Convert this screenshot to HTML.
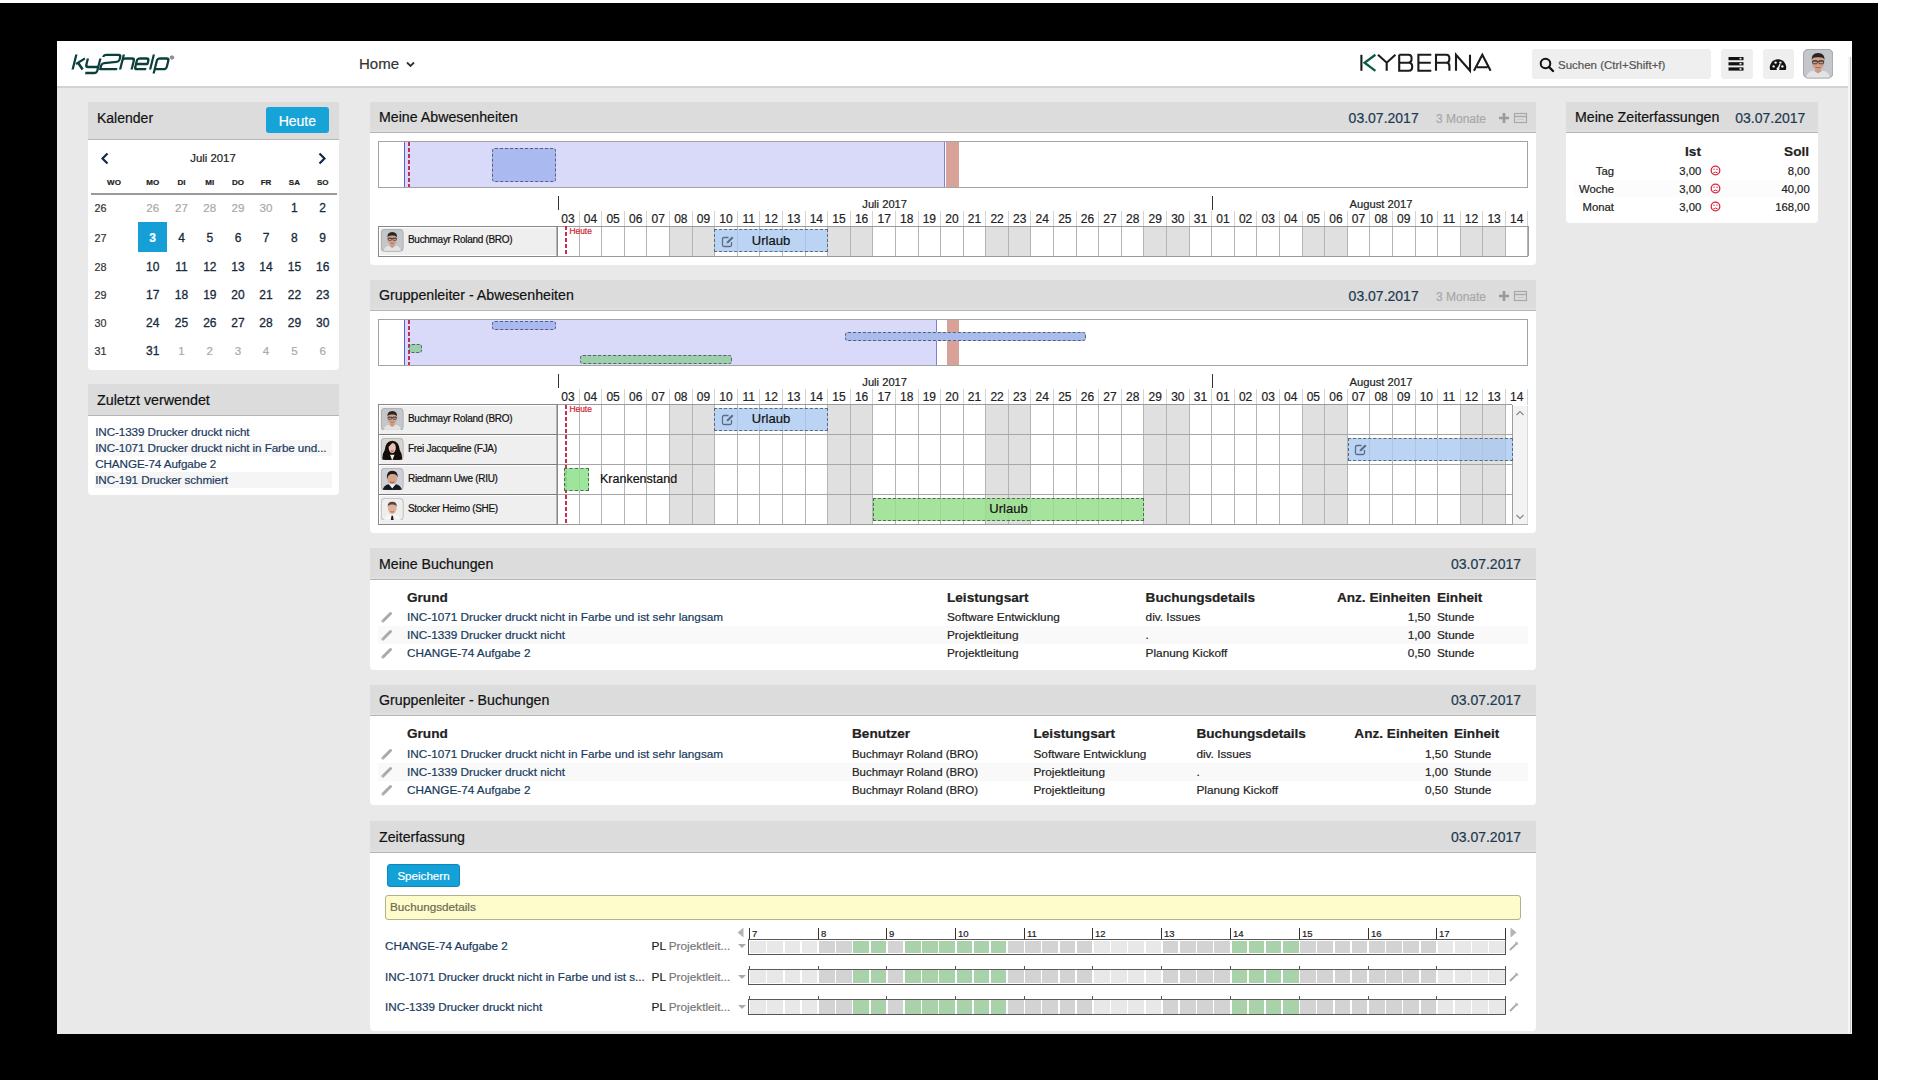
<!DOCTYPE html>
<html><head><meta charset="utf-8"><title>ky2help</title>
<style>
html,body{margin:0;padding:0;}
body{width:1920px;height:1080px;position:relative;overflow:hidden;background:#fff;font-family:"Liberation Sans", sans-serif;}
div{-webkit-text-stroke-width:0.2px;}
</style></head><body>
<div style="position:absolute;left:0px;top:3px;width:1878px;height:1077px;background:#000;"></div>
<div style="position:absolute;left:57px;top:41px;width:1795px;height:992.6px;background:#e9e9e9;"></div>
<div style="position:absolute;left:57px;top:41px;width:1795px;height:46px;background:#fff;"></div>
<div style="position:absolute;left:57px;top:86px;width:1791px;height:2px;background:#d2d2d2;"></div>
<div style="position:absolute;left:1848px;top:57px;width:4px;height:976px;background:#f6f6f6;"></div>
<div style="position:absolute;left:1850px;top:57px;width:1.2px;height:976px;background:#c4c4c4;"></div>
<svg style="position:absolute;left:0;top:0" width="1920" height="100">
<g transform="translate(75,54) skewX(-14)" fill="none" stroke="#0b3f3c" stroke-width="2.3" stroke-linecap="butt" stroke-linejoin="round">
<path d="M1.5,0.5 V15.5 M11,4.5 L3.5,10 M5.5,9 L11.5,15.5"/>
<path d="M14,4.5 V10.5 Q14,13 16.5,13 H25.5 M26.5,4.5 V16.5 Q26.5,19 24,19 H15"/>
<path d="M29,3 Q29,0.8 31.5,0.8 H43.5 Q46,0.8 46,3.3 V5 Q46,7.5 43.5,7.8 L31.5,9.2 Q29,9.5 29,12 V15.2 H46"/>
<path d="M49,0.5 V15.5 M49,7 Q49,4.5 51.5,4.5 H58 Q60.5,4.5 60.5,7 V15.5"/>
<path d="M75,15.2 H66 Q63.5,15.2 63.5,12.7 V7 Q63.5,4.5 66,4.5 H72.5 Q75,4.5 75,7 V10 H63.5"/>
<path d="M79,0.5 V15.5"/>
<path d="M83.5,19.5 V7 Q83.5,4.5 86,4.5 H92.5 Q95,4.5 95,7 V12.7 Q95,15.2 92.5,15.2 H83.5"/>
</g>
<circle cx="172" cy="57.5" r="1.7" fill="#999" stroke="#666" stroke-width="0.7"/>
<g fill="none" stroke="#1b1b1b" stroke-width="2.1" stroke-linejoin="miter">
<path d="M1361.4,54.8 V70.8"/>
<path d="M1375.4,54.8 L1364.6,62.7 L1375.4,70.8" stroke="#0a5a48" stroke-width="2.3"/>
<path d="M1378,54.8 L1386.7,62.7 L1395.4,54.8 M1386.7,62.7 V70.8"/>
<path d="M1399.2,54.8 H1408.5 Q1411.6,54.8 1411.6,58.6 Q1411.6,62.7 1408.5,62.7 H1399.2 M1408.8,62.7 Q1412.2,62.7 1412.2,66.7 Q1412.2,70.8 1408.8,70.8 H1399.2 V54.8"/>
<path d="M1431.3,54.8 H1418.4 V70.8 H1431.3 M1418.4,62.7 H1430.8"/>
<path d="M1436,70.8 V54.8 H1446.3 Q1449.4,54.8 1449.4,58.7 Q1449.4,62.7 1446.3,62.7 H1436 M1446.3,62.7 Q1449.4,62.7 1449.4,66 V70.8"/>
<path d="M1456,70.8 V54.8 L1470,70.8 V54.8"/>
<path d="M1474,70.8 L1482.3,54.8 L1490.6,70.8 M1477,67.3 H1487.6"/>
</g>
</svg>
<div style="position:absolute;left:359px;top:53.8px;height:20px;line-height:20px;font-size:15px;color:#333;font-weight:400;white-space:nowrap;">Home</div>
<svg style="position:absolute;left:405px;top:60px" width="12" height="10"><path d="M2,2.5 L5.5,6 L9,2.5" fill="none" stroke="#333" stroke-width="1.8"/></svg>
<div style="position:absolute;left:1532px;top:49px;width:179px;height:30px;background:#efefef;border-radius:3px;"></div>
<svg style="position:absolute;left:1538px;top:56px" width="18" height="18"><circle cx="7.5" cy="7.5" r="4.8" fill="none" stroke="#111" stroke-width="2"/><path d="M11,11 L15,15" stroke="#111" stroke-width="2.4" stroke-linecap="round"/></svg>
<div style="position:absolute;left:1558px;top:55.0px;height:20px;line-height:20px;font-size:11.5px;color:#555;font-weight:400;white-space:nowrap;">Suchen (Ctrl+Shift+f)</div>
<div style="position:absolute;left:1721px;top:49px;width:32px;height:30px;background:#efefef;border-radius:3px;"></div>
<svg style="position:absolute;left:1727px;top:55px" width="20" height="18"><rect x="1.5" y="2" width="15" height="3.2" fill="#111"/><rect x="1.5" y="7.2" width="15" height="3.2" fill="#111"/><rect x="1.5" y="12.4" width="15" height="3.2" fill="#111"/><rect x="12.5" y="2.8" width="2" height="1.6" fill="#eee"/><rect x="12.5" y="8" width="2" height="1.6" fill="#eee"/><rect x="12.5" y="13.2" width="2" height="1.6" fill="#eee"/></svg>
<div style="position:absolute;left:1762.5px;top:49px;width:31px;height:30px;background:#efefef;border-radius:3px;"></div>
<svg style="position:absolute;left:1769px;top:57px" width="18" height="15"><path d="M1.2,13 A8.2,8.2 0 1 1 16.8,13 Z" fill="#111"/><circle cx="4.6" cy="9.4" r="1.2" fill="#f0f0f0"/><circle cx="6.6" cy="5.6" r="1.2" fill="#f0f0f0"/><circle cx="11.4" cy="5.6" r="1.2" fill="#f0f0f0"/><circle cx="13.4" cy="9.4" r="1.2" fill="#f0f0f0"/><path d="M9,12 L11,7.2" stroke="#f0f0f0" stroke-width="1.5"/><circle cx="9" cy="11.8" r="1.5" fill="#f0f0f0"/></svg>
<svg style="position:absolute;left:1803.3px;top:49px" width="30.2" height="29.5" viewBox="0 0 30 30" preserveAspectRatio="none"><defs><clipPath id="cp"><rect x="0" y="0" width="30" height="30" rx="5"/></clipPath></defs><g clip-path="url(#cp)"><rect width="30" height="30" fill="#c3c6cb"/><path d="M3,30 Q4,23 10,22 L15,24 L20,22 Q26,23 27,30 Z" fill="#e4e2e2"/><path d="M12,19 H18 V23 L15,25 L12,23 Z" fill="#c99a85"/><ellipse cx="15" cy="13.5" rx="6.2" ry="8" fill="#d2a08a"/><path d="M8.5,12 Q8,4 15,4 Q22,4 21.5,12 Q21,8 15,8.5 Q9,8 8.5,12 Z" fill="#2b2522"/><path d="M9,12.6 H21" stroke="#2a2a2a" stroke-width="0.7"/><rect x="9.6" y="11.8" width="4.6" height="3.2" rx="0.8" fill="none" stroke="#2a2a2a" stroke-width="0.8"/><rect x="15.8" y="11.8" width="4.6" height="3.2" rx="0.8" fill="none" stroke="#2a2a2a" stroke-width="0.8"/><path d="M12.5,18.5 Q15,19.8 17.5,18.5" stroke="#9a5e50" stroke-width="0.9" fill="none"/></g><rect x="0.4" y="0.4" width="29.2" height="29.2" rx="5" fill="none" stroke="#9d9d9d" stroke-width="0.8"/></svg>
<div style="position:absolute;left:88px;top:102px;width:251px;height:36.5px;background:#dcdcdc;"></div>
<div style="position:absolute;left:88px;top:138.5px;width:251px;height:1.5px;background:#b5b5b5;"></div>
<div style="position:absolute;left:88px;top:140px;width:251px;height:230px;background:#fff;border-radius:0 0 4px 4px;"></div>
<div style="position:absolute;left:97px;top:107.7px;height:20px;line-height:20px;font-size:14px;color:#111;font-weight:400;white-space:nowrap;">Kalender</div>
<div style="position:absolute;left:266px;top:107px;width:62.5px;height:26px;background:#15a3d8;border-radius:3px;"></div>
<div style="position:absolute;left:-2.6999999999999886px;width:600px;top:110.5px;height:20px;line-height:20px;font-size:14px;color:#fff;font-weight:400;white-space:nowrap;text-align:center;">Heute</div>
<svg style="position:absolute;left:99px;top:152px" width="12" height="13"><path d="M8.5,1.5 L3.5,6.5 L8.5,11.5" fill="none" stroke="#15284a" stroke-width="2.2"/></svg>
<svg style="position:absolute;left:316px;top:152px" width="12" height="13"><path d="M3.5,1.5 L8.5,6.5 L3.5,11.5" fill="none" stroke="#15284a" stroke-width="2.2"/></svg>
<div style="position:absolute;left:-87px;width:600px;top:148.4px;height:20px;line-height:20px;font-size:11.4px;color:#222;font-weight:400;white-space:nowrap;text-align:center;">Juli 2017</div>
<div style="position:absolute;left:-186px;width:600px;top:172.7px;height:20px;line-height:20px;font-size:8px;color:#222;font-weight:700;white-space:nowrap;text-align:center;">WO</div>
<div style="position:absolute;left:-147.3px;width:600px;top:172.7px;height:20px;line-height:20px;font-size:8px;color:#222;font-weight:700;white-space:nowrap;text-align:center;">MO</div>
<div style="position:absolute;left:-118.5px;width:600px;top:172.7px;height:20px;line-height:20px;font-size:8px;color:#222;font-weight:700;white-space:nowrap;text-align:center;">DI</div>
<div style="position:absolute;left:-90.19999999999999px;width:600px;top:172.7px;height:20px;line-height:20px;font-size:8px;color:#222;font-weight:700;white-space:nowrap;text-align:center;">MI</div>
<div style="position:absolute;left:-62px;width:600px;top:172.7px;height:20px;line-height:20px;font-size:8px;color:#222;font-weight:700;white-space:nowrap;text-align:center;">DO</div>
<div style="position:absolute;left:-34px;width:600px;top:172.7px;height:20px;line-height:20px;font-size:8px;color:#222;font-weight:700;white-space:nowrap;text-align:center;">FR</div>
<div style="position:absolute;left:-5.600000000000023px;width:600px;top:172.7px;height:20px;line-height:20px;font-size:8px;color:#222;font-weight:700;white-space:nowrap;text-align:center;">SA</div>
<div style="position:absolute;left:22.69999999999999px;width:600px;top:172.7px;height:20px;line-height:20px;font-size:8px;color:#222;font-weight:700;white-space:nowrap;text-align:center;">SO</div>
<div style="position:absolute;left:90.5px;top:193px;width:246px;height:1.5px;background:#9a9a9a;"></div>
<div style="position:absolute;left:94.4px;top:198.0px;height:20px;line-height:20px;font-size:10.8px;color:#333;font-weight:400;white-space:nowrap;">26</div>
<div style="position:absolute;left:-147.3px;width:600px;top:198.0px;height:20px;line-height:20px;font-size:11.6px;color:#a9a9a9;font-weight:400;white-space:nowrap;text-align:center;">26</div>
<div style="position:absolute;left:-118.5px;width:600px;top:198.0px;height:20px;line-height:20px;font-size:11.6px;color:#a9a9a9;font-weight:400;white-space:nowrap;text-align:center;">27</div>
<div style="position:absolute;left:-90.19999999999999px;width:600px;top:198.0px;height:20px;line-height:20px;font-size:11.6px;color:#a9a9a9;font-weight:400;white-space:nowrap;text-align:center;">28</div>
<div style="position:absolute;left:-62px;width:600px;top:198.0px;height:20px;line-height:20px;font-size:11.6px;color:#a9a9a9;font-weight:400;white-space:nowrap;text-align:center;">29</div>
<div style="position:absolute;left:-34px;width:600px;top:198.0px;height:20px;line-height:20px;font-size:11.6px;color:#a9a9a9;font-weight:400;white-space:nowrap;text-align:center;">30</div>
<div style="position:absolute;left:-5.600000000000023px;width:600px;top:198.0px;height:20px;line-height:20px;font-size:12px;color:#172a3c;font-weight:400;white-space:nowrap;text-align:center;-webkit-text-stroke:0.3px #172a3c;">1</div>
<div style="position:absolute;left:22.69999999999999px;width:600px;top:198.0px;height:20px;line-height:20px;font-size:12px;color:#172a3c;font-weight:400;white-space:nowrap;text-align:center;-webkit-text-stroke:0.3px #172a3c;">2</div>
<div style="position:absolute;left:94.4px;top:227.8px;height:20px;line-height:20px;font-size:10.8px;color:#333;font-weight:400;white-space:nowrap;">27</div>
<div style="position:absolute;left:138px;top:222px;width:29px;height:30px;background:#169fd6;"></div>
<div style="position:absolute;left:-147.3px;width:600px;top:227.8px;height:20px;line-height:20px;font-size:12px;color:#fff;font-weight:700;white-space:nowrap;text-align:center;">3</div>
<div style="position:absolute;left:-118.5px;width:600px;top:227.8px;height:20px;line-height:20px;font-size:12px;color:#172a3c;font-weight:400;white-space:nowrap;text-align:center;-webkit-text-stroke:0.3px #172a3c;">4</div>
<div style="position:absolute;left:-90.19999999999999px;width:600px;top:227.8px;height:20px;line-height:20px;font-size:12px;color:#172a3c;font-weight:400;white-space:nowrap;text-align:center;-webkit-text-stroke:0.3px #172a3c;">5</div>
<div style="position:absolute;left:-62px;width:600px;top:227.8px;height:20px;line-height:20px;font-size:12px;color:#172a3c;font-weight:400;white-space:nowrap;text-align:center;-webkit-text-stroke:0.3px #172a3c;">6</div>
<div style="position:absolute;left:-34px;width:600px;top:227.8px;height:20px;line-height:20px;font-size:12px;color:#172a3c;font-weight:400;white-space:nowrap;text-align:center;-webkit-text-stroke:0.3px #172a3c;">7</div>
<div style="position:absolute;left:-5.600000000000023px;width:600px;top:227.8px;height:20px;line-height:20px;font-size:12px;color:#172a3c;font-weight:400;white-space:nowrap;text-align:center;-webkit-text-stroke:0.3px #172a3c;">8</div>
<div style="position:absolute;left:22.69999999999999px;width:600px;top:227.8px;height:20px;line-height:20px;font-size:12px;color:#172a3c;font-weight:400;white-space:nowrap;text-align:center;-webkit-text-stroke:0.3px #172a3c;">9</div>
<div style="position:absolute;left:94.4px;top:256.5px;height:20px;line-height:20px;font-size:10.8px;color:#333;font-weight:400;white-space:nowrap;">28</div>
<div style="position:absolute;left:-147.3px;width:600px;top:256.5px;height:20px;line-height:20px;font-size:12px;color:#172a3c;font-weight:400;white-space:nowrap;text-align:center;-webkit-text-stroke:0.3px #172a3c;">10</div>
<div style="position:absolute;left:-118.5px;width:600px;top:256.5px;height:20px;line-height:20px;font-size:12px;color:#172a3c;font-weight:400;white-space:nowrap;text-align:center;-webkit-text-stroke:0.3px #172a3c;">11</div>
<div style="position:absolute;left:-90.19999999999999px;width:600px;top:256.5px;height:20px;line-height:20px;font-size:12px;color:#172a3c;font-weight:400;white-space:nowrap;text-align:center;-webkit-text-stroke:0.3px #172a3c;">12</div>
<div style="position:absolute;left:-62px;width:600px;top:256.5px;height:20px;line-height:20px;font-size:12px;color:#172a3c;font-weight:400;white-space:nowrap;text-align:center;-webkit-text-stroke:0.3px #172a3c;">13</div>
<div style="position:absolute;left:-34px;width:600px;top:256.5px;height:20px;line-height:20px;font-size:12px;color:#172a3c;font-weight:400;white-space:nowrap;text-align:center;-webkit-text-stroke:0.3px #172a3c;">14</div>
<div style="position:absolute;left:-5.600000000000023px;width:600px;top:256.5px;height:20px;line-height:20px;font-size:12px;color:#172a3c;font-weight:400;white-space:nowrap;text-align:center;-webkit-text-stroke:0.3px #172a3c;">15</div>
<div style="position:absolute;left:22.69999999999999px;width:600px;top:256.5px;height:20px;line-height:20px;font-size:12px;color:#172a3c;font-weight:400;white-space:nowrap;text-align:center;-webkit-text-stroke:0.3px #172a3c;">16</div>
<div style="position:absolute;left:94.4px;top:285.0px;height:20px;line-height:20px;font-size:10.8px;color:#333;font-weight:400;white-space:nowrap;">29</div>
<div style="position:absolute;left:-147.3px;width:600px;top:285.0px;height:20px;line-height:20px;font-size:12px;color:#172a3c;font-weight:400;white-space:nowrap;text-align:center;-webkit-text-stroke:0.3px #172a3c;">17</div>
<div style="position:absolute;left:-118.5px;width:600px;top:285.0px;height:20px;line-height:20px;font-size:12px;color:#172a3c;font-weight:400;white-space:nowrap;text-align:center;-webkit-text-stroke:0.3px #172a3c;">18</div>
<div style="position:absolute;left:-90.19999999999999px;width:600px;top:285.0px;height:20px;line-height:20px;font-size:12px;color:#172a3c;font-weight:400;white-space:nowrap;text-align:center;-webkit-text-stroke:0.3px #172a3c;">19</div>
<div style="position:absolute;left:-62px;width:600px;top:285.0px;height:20px;line-height:20px;font-size:12px;color:#172a3c;font-weight:400;white-space:nowrap;text-align:center;-webkit-text-stroke:0.3px #172a3c;">20</div>
<div style="position:absolute;left:-34px;width:600px;top:285.0px;height:20px;line-height:20px;font-size:12px;color:#172a3c;font-weight:400;white-space:nowrap;text-align:center;-webkit-text-stroke:0.3px #172a3c;">21</div>
<div style="position:absolute;left:-5.600000000000023px;width:600px;top:285.0px;height:20px;line-height:20px;font-size:12px;color:#172a3c;font-weight:400;white-space:nowrap;text-align:center;-webkit-text-stroke:0.3px #172a3c;">22</div>
<div style="position:absolute;left:22.69999999999999px;width:600px;top:285.0px;height:20px;line-height:20px;font-size:12px;color:#172a3c;font-weight:400;white-space:nowrap;text-align:center;-webkit-text-stroke:0.3px #172a3c;">23</div>
<div style="position:absolute;left:94.4px;top:313.0px;height:20px;line-height:20px;font-size:10.8px;color:#333;font-weight:400;white-space:nowrap;">30</div>
<div style="position:absolute;left:-147.3px;width:600px;top:313.0px;height:20px;line-height:20px;font-size:12px;color:#172a3c;font-weight:400;white-space:nowrap;text-align:center;-webkit-text-stroke:0.3px #172a3c;">24</div>
<div style="position:absolute;left:-118.5px;width:600px;top:313.0px;height:20px;line-height:20px;font-size:12px;color:#172a3c;font-weight:400;white-space:nowrap;text-align:center;-webkit-text-stroke:0.3px #172a3c;">25</div>
<div style="position:absolute;left:-90.19999999999999px;width:600px;top:313.0px;height:20px;line-height:20px;font-size:12px;color:#172a3c;font-weight:400;white-space:nowrap;text-align:center;-webkit-text-stroke:0.3px #172a3c;">26</div>
<div style="position:absolute;left:-62px;width:600px;top:313.0px;height:20px;line-height:20px;font-size:12px;color:#172a3c;font-weight:400;white-space:nowrap;text-align:center;-webkit-text-stroke:0.3px #172a3c;">27</div>
<div style="position:absolute;left:-34px;width:600px;top:313.0px;height:20px;line-height:20px;font-size:12px;color:#172a3c;font-weight:400;white-space:nowrap;text-align:center;-webkit-text-stroke:0.3px #172a3c;">28</div>
<div style="position:absolute;left:-5.600000000000023px;width:600px;top:313.0px;height:20px;line-height:20px;font-size:12px;color:#172a3c;font-weight:400;white-space:nowrap;text-align:center;-webkit-text-stroke:0.3px #172a3c;">29</div>
<div style="position:absolute;left:22.69999999999999px;width:600px;top:313.0px;height:20px;line-height:20px;font-size:12px;color:#172a3c;font-weight:400;white-space:nowrap;text-align:center;-webkit-text-stroke:0.3px #172a3c;">30</div>
<div style="position:absolute;left:94.4px;top:341.0px;height:20px;line-height:20px;font-size:10.8px;color:#333;font-weight:400;white-space:nowrap;">31</div>
<div style="position:absolute;left:-147.3px;width:600px;top:341.0px;height:20px;line-height:20px;font-size:12px;color:#172a3c;font-weight:400;white-space:nowrap;text-align:center;-webkit-text-stroke:0.3px #172a3c;">31</div>
<div style="position:absolute;left:-118.5px;width:600px;top:341.0px;height:20px;line-height:20px;font-size:11.6px;color:#a9a9a9;font-weight:400;white-space:nowrap;text-align:center;">1</div>
<div style="position:absolute;left:-90.19999999999999px;width:600px;top:341.0px;height:20px;line-height:20px;font-size:11.6px;color:#a9a9a9;font-weight:400;white-space:nowrap;text-align:center;">2</div>
<div style="position:absolute;left:-62px;width:600px;top:341.0px;height:20px;line-height:20px;font-size:11.6px;color:#a9a9a9;font-weight:400;white-space:nowrap;text-align:center;">3</div>
<div style="position:absolute;left:-34px;width:600px;top:341.0px;height:20px;line-height:20px;font-size:11.6px;color:#a9a9a9;font-weight:400;white-space:nowrap;text-align:center;">4</div>
<div style="position:absolute;left:-5.600000000000023px;width:600px;top:341.0px;height:20px;line-height:20px;font-size:11.6px;color:#a9a9a9;font-weight:400;white-space:nowrap;text-align:center;">5</div>
<div style="position:absolute;left:22.69999999999999px;width:600px;top:341.0px;height:20px;line-height:20px;font-size:11.6px;color:#a9a9a9;font-weight:400;white-space:nowrap;text-align:center;">6</div>
<div style="position:absolute;left:88px;top:384px;width:251px;height:30.5px;background:#dcdcdc;"></div>
<div style="position:absolute;left:88px;top:414.5px;width:251px;height:1.5px;background:#b5b5b5;"></div>
<div style="position:absolute;left:88px;top:416px;width:251px;height:79px;background:#fff;border-radius:0 0 4px 4px;"></div>
<div style="position:absolute;left:97px;top:390.2px;height:20px;line-height:20px;font-size:14.3px;color:#111;font-weight:400;white-space:nowrap;">Zuletzt verwendet</div>
<div style="position:absolute;left:95px;top:440px;width:237px;height:16px;background:#f7f7f7;"></div>
<div style="position:absolute;left:95px;top:472px;width:237px;height:16px;background:#f5f5f5;"></div>
<div style="position:absolute;left:95.2px;top:422.0px;height:20px;line-height:20px;font-size:11.7px;color:#1d3a5e;font-weight:400;white-space:nowrap;letter-spacing:-0.1px;">INC-1339 Drucker druckt nicht</div>
<div style="position:absolute;left:95.2px;top:438.0px;height:20px;line-height:20px;font-size:11.7px;color:#1d3a5e;font-weight:400;white-space:nowrap;letter-spacing:-0.1px;">INC-1071 Drucker druckt nicht in Farbe und...</div>
<div style="position:absolute;left:95.2px;top:454.0px;height:20px;line-height:20px;font-size:11.7px;color:#1d3a5e;font-weight:400;white-space:nowrap;letter-spacing:-0.1px;">CHANGE-74 Aufgabe 2</div>
<div style="position:absolute;left:95.2px;top:470.0px;height:20px;line-height:20px;font-size:11.7px;color:#1d3a5e;font-weight:400;white-space:nowrap;letter-spacing:-0.1px;">INC-191 Drucker schmiert</div>
<div style="position:absolute;left:370px;top:102px;width:1166px;height:29.5px;background:#dcdcdc;"></div>
<div style="position:absolute;left:370px;top:130px;width:1166px;height:1.5px;background:#e0e0e0;"></div>
<div style="position:absolute;left:370px;top:131.5px;width:1166px;height:1.5px;background:#b5b5b5;"></div>
<div style="position:absolute;left:370px;top:133px;width:1166px;height:131.5px;background:#fff;border-radius:0 0 4px 4px;"></div>
<div style="position:absolute;left:379px;top:107.0px;height:20px;line-height:20px;font-size:14.2px;color:#111;font-weight:400;white-space:nowrap;">Meine Abwesenheiten</div>
<div style="position:absolute;left:818.7px;width:600px;top:107.5px;height:20px;line-height:20px;font-size:14px;color:#1d3a50;font-weight:400;white-space:nowrap;text-align:right;">03.07.2017</div>
<div style="position:absolute;left:1436px;top:108.5px;height:20px;line-height:20px;font-size:12px;color:#a8a8a8;font-weight:400;white-space:nowrap;">3 Monate</div>
<svg style="position:absolute;left:1497px;top:110.5px" width="34" height="14"><path d="M7,2 V12 M2,7 H12" stroke="#9a9a9a" stroke-width="2.6"/><rect x="17.5" y="2.5" width="12" height="9" fill="none" stroke="#a8a8a8" stroke-width="1.2"/><path d="M17.5,5.5 H29.5" stroke="#a8a8a8" stroke-width="1.4"/><path d="M20,8.5 H27" stroke="#c8c8c8" stroke-width="1"/></svg>
<div style="position:absolute;left:377.5px;top:141px;width:1150.5px;height:47px;background:#fff;border:1px solid #a3a3a3;box-sizing:border-box;"></div>
<div style="position:absolute;left:404px;top:142px;width:541px;height:45px;background:#d9d9f9;border-left:1.5px solid #5c5cd0;border-right:1px solid #8080d0;box-sizing:border-box;"></div>
<div style="position:absolute;left:408px;top:142px;width:1.5px;height:45px;background:repeating-linear-gradient(to bottom,#c2305a 0 4px,transparent 4px 6px);"></div>
<div style="position:absolute;left:945.5px;top:142px;width:13.5px;height:45px;background:#d9a299;"></div>
<div style="position:absolute;left:492px;top:148px;width:63.5px;height:33.5px;background:#aabaf0;border:1.5px dashed #55607a;box-sizing:border-box;border-radius:3px;"></div>
<div style="position:absolute;left:558.2px;top:196px;width:1.2px;height:14px;background:#333;"></div>
<div style="position:absolute;left:1211.5px;top:196px;width:1.2px;height:14px;background:#333;"></div>
<div style="position:absolute;left:584.7px;width:600px;top:193.7px;height:20px;line-height:20px;font-size:11.2px;color:#222;font-weight:400;white-space:nowrap;text-align:center;">Juli 2017</div>
<div style="position:absolute;left:1081px;width:600px;top:193.7px;height:20px;line-height:20px;font-size:11.2px;color:#222;font-weight:400;white-space:nowrap;text-align:center;">August 2017</div>
<div style="position:absolute;left:267.895px;width:600px;top:209.0px;height:20px;line-height:20px;font-size:12px;color:#222;font-weight:400;white-space:nowrap;text-align:center;">03</div>
<div style="position:absolute;left:290.485px;width:600px;top:209.0px;height:20px;line-height:20px;font-size:12px;color:#222;font-weight:400;white-space:nowrap;text-align:center;">04</div>
<div style="position:absolute;left:578.69px;top:211px;width:1px;height:15px;background:#d4d4d4;"></div>
<div style="position:absolute;left:313.07499999999993px;width:600px;top:209.0px;height:20px;line-height:20px;font-size:12px;color:#222;font-weight:400;white-space:nowrap;text-align:center;">05</div>
<div style="position:absolute;left:601.28px;top:211px;width:1px;height:15px;background:#d4d4d4;"></div>
<div style="position:absolute;left:335.66499999999996px;width:600px;top:209.0px;height:20px;line-height:20px;font-size:12px;color:#222;font-weight:400;white-space:nowrap;text-align:center;">06</div>
<div style="position:absolute;left:623.87px;top:211px;width:1px;height:15px;background:#d4d4d4;"></div>
<div style="position:absolute;left:358.255px;width:600px;top:209.0px;height:20px;line-height:20px;font-size:12px;color:#222;font-weight:400;white-space:nowrap;text-align:center;">07</div>
<div style="position:absolute;left:646.46px;top:211px;width:1px;height:15px;background:#d4d4d4;"></div>
<div style="position:absolute;left:380.845px;width:600px;top:209.0px;height:20px;line-height:20px;font-size:12px;color:#222;font-weight:400;white-space:nowrap;text-align:center;">08</div>
<div style="position:absolute;left:669.0500000000001px;top:211px;width:1px;height:15px;background:#d4d4d4;"></div>
<div style="position:absolute;left:403.43499999999995px;width:600px;top:209.0px;height:20px;line-height:20px;font-size:12px;color:#222;font-weight:400;white-space:nowrap;text-align:center;">09</div>
<div style="position:absolute;left:691.64px;top:211px;width:1px;height:15px;background:#d4d4d4;"></div>
<div style="position:absolute;left:426.025px;width:600px;top:209.0px;height:20px;line-height:20px;font-size:12px;color:#222;font-weight:400;white-space:nowrap;text-align:center;">10</div>
<div style="position:absolute;left:714.23px;top:211px;width:1px;height:15px;background:#d4d4d4;"></div>
<div style="position:absolute;left:448.615px;width:600px;top:209.0px;height:20px;line-height:20px;font-size:12px;color:#222;font-weight:400;white-space:nowrap;text-align:center;">11</div>
<div style="position:absolute;left:736.82px;top:211px;width:1px;height:15px;background:#d4d4d4;"></div>
<div style="position:absolute;left:471.20500000000004px;width:600px;top:209.0px;height:20px;line-height:20px;font-size:12px;color:#222;font-weight:400;white-space:nowrap;text-align:center;">12</div>
<div style="position:absolute;left:759.4100000000001px;top:211px;width:1px;height:15px;background:#d4d4d4;"></div>
<div style="position:absolute;left:493.79499999999996px;width:600px;top:209.0px;height:20px;line-height:20px;font-size:12px;color:#222;font-weight:400;white-space:nowrap;text-align:center;">13</div>
<div style="position:absolute;left:782.0px;top:211px;width:1px;height:15px;background:#d4d4d4;"></div>
<div style="position:absolute;left:516.385px;width:600px;top:209.0px;height:20px;line-height:20px;font-size:12px;color:#222;font-weight:400;white-space:nowrap;text-align:center;">14</div>
<div style="position:absolute;left:804.59px;top:211px;width:1px;height:15px;background:#d4d4d4;"></div>
<div style="position:absolute;left:538.975px;width:600px;top:209.0px;height:20px;line-height:20px;font-size:12px;color:#222;font-weight:400;white-space:nowrap;text-align:center;">15</div>
<div style="position:absolute;left:827.1800000000001px;top:211px;width:1px;height:15px;background:#d4d4d4;"></div>
<div style="position:absolute;left:561.5649999999999px;width:600px;top:209.0px;height:20px;line-height:20px;font-size:12px;color:#222;font-weight:400;white-space:nowrap;text-align:center;">16</div>
<div style="position:absolute;left:849.77px;top:211px;width:1px;height:15px;background:#d4d4d4;"></div>
<div style="position:absolute;left:584.155px;width:600px;top:209.0px;height:20px;line-height:20px;font-size:12px;color:#222;font-weight:400;white-space:nowrap;text-align:center;">17</div>
<div style="position:absolute;left:872.36px;top:211px;width:1px;height:15px;background:#d4d4d4;"></div>
<div style="position:absolute;left:606.745px;width:600px;top:209.0px;height:20px;line-height:20px;font-size:12px;color:#222;font-weight:400;white-space:nowrap;text-align:center;">18</div>
<div style="position:absolute;left:894.95px;top:211px;width:1px;height:15px;background:#d4d4d4;"></div>
<div style="position:absolute;left:629.3349999999999px;width:600px;top:209.0px;height:20px;line-height:20px;font-size:12px;color:#222;font-weight:400;white-space:nowrap;text-align:center;">19</div>
<div style="position:absolute;left:917.54px;top:211px;width:1px;height:15px;background:#d4d4d4;"></div>
<div style="position:absolute;left:651.925px;width:600px;top:209.0px;height:20px;line-height:20px;font-size:12px;color:#222;font-weight:400;white-space:nowrap;text-align:center;">20</div>
<div style="position:absolute;left:940.13px;top:211px;width:1px;height:15px;background:#d4d4d4;"></div>
<div style="position:absolute;left:674.515px;width:600px;top:209.0px;height:20px;line-height:20px;font-size:12px;color:#222;font-weight:400;white-space:nowrap;text-align:center;">21</div>
<div style="position:absolute;left:962.72px;top:211px;width:1px;height:15px;background:#d4d4d4;"></div>
<div style="position:absolute;left:697.1049999999999px;width:600px;top:209.0px;height:20px;line-height:20px;font-size:12px;color:#222;font-weight:400;white-space:nowrap;text-align:center;">22</div>
<div style="position:absolute;left:985.31px;top:211px;width:1px;height:15px;background:#d4d4d4;"></div>
<div style="position:absolute;left:719.695px;width:600px;top:209.0px;height:20px;line-height:20px;font-size:12px;color:#222;font-weight:400;white-space:nowrap;text-align:center;">23</div>
<div style="position:absolute;left:1007.9000000000001px;top:211px;width:1px;height:15px;background:#d4d4d4;"></div>
<div style="position:absolute;left:742.2850000000001px;width:600px;top:209.0px;height:20px;line-height:20px;font-size:12px;color:#222;font-weight:400;white-space:nowrap;text-align:center;">24</div>
<div style="position:absolute;left:1030.49px;top:211px;width:1px;height:15px;background:#d4d4d4;"></div>
<div style="position:absolute;left:764.875px;width:600px;top:209.0px;height:20px;line-height:20px;font-size:12px;color:#222;font-weight:400;white-space:nowrap;text-align:center;">25</div>
<div style="position:absolute;left:1053.08px;top:211px;width:1px;height:15px;background:#d4d4d4;"></div>
<div style="position:absolute;left:787.4650000000001px;width:600px;top:209.0px;height:20px;line-height:20px;font-size:12px;color:#222;font-weight:400;white-space:nowrap;text-align:center;">26</div>
<div style="position:absolute;left:1075.67px;top:211px;width:1px;height:15px;background:#d4d4d4;"></div>
<div style="position:absolute;left:810.0550000000001px;width:600px;top:209.0px;height:20px;line-height:20px;font-size:12px;color:#222;font-weight:400;white-space:nowrap;text-align:center;">27</div>
<div style="position:absolute;left:1098.26px;top:211px;width:1px;height:15px;background:#d4d4d4;"></div>
<div style="position:absolute;left:832.645px;width:600px;top:209.0px;height:20px;line-height:20px;font-size:12px;color:#222;font-weight:400;white-space:nowrap;text-align:center;">28</div>
<div style="position:absolute;left:1120.85px;top:211px;width:1px;height:15px;background:#d4d4d4;"></div>
<div style="position:absolute;left:855.2350000000001px;width:600px;top:209.0px;height:20px;line-height:20px;font-size:12px;color:#222;font-weight:400;white-space:nowrap;text-align:center;">29</div>
<div style="position:absolute;left:1143.44px;top:211px;width:1px;height:15px;background:#d4d4d4;"></div>
<div style="position:absolute;left:877.825px;width:600px;top:209.0px;height:20px;line-height:20px;font-size:12px;color:#222;font-weight:400;white-space:nowrap;text-align:center;">30</div>
<div style="position:absolute;left:1166.03px;top:211px;width:1px;height:15px;background:#d4d4d4;"></div>
<div style="position:absolute;left:900.415px;width:600px;top:209.0px;height:20px;line-height:20px;font-size:12px;color:#222;font-weight:400;white-space:nowrap;text-align:center;">31</div>
<div style="position:absolute;left:1188.62px;top:211px;width:1px;height:15px;background:#d4d4d4;"></div>
<div style="position:absolute;left:923.0050000000001px;width:600px;top:209.0px;height:20px;line-height:20px;font-size:12px;color:#222;font-weight:400;white-space:nowrap;text-align:center;">01</div>
<div style="position:absolute;left:1211.21px;top:211px;width:1px;height:15px;background:#d4d4d4;"></div>
<div style="position:absolute;left:945.5950000000003px;width:600px;top:209.0px;height:20px;line-height:20px;font-size:12px;color:#222;font-weight:400;white-space:nowrap;text-align:center;">02</div>
<div style="position:absolute;left:1233.8000000000002px;top:211px;width:1px;height:15px;background:#d4d4d4;"></div>
<div style="position:absolute;left:968.185px;width:600px;top:209.0px;height:20px;line-height:20px;font-size:12px;color:#222;font-weight:400;white-space:nowrap;text-align:center;">03</div>
<div style="position:absolute;left:1256.3899999999999px;top:211px;width:1px;height:15px;background:#d4d4d4;"></div>
<div style="position:absolute;left:990.7750000000001px;width:600px;top:209.0px;height:20px;line-height:20px;font-size:12px;color:#222;font-weight:400;white-space:nowrap;text-align:center;">04</div>
<div style="position:absolute;left:1278.98px;top:211px;width:1px;height:15px;background:#d4d4d4;"></div>
<div style="position:absolute;left:1013.3650000000002px;width:600px;top:209.0px;height:20px;line-height:20px;font-size:12px;color:#222;font-weight:400;white-space:nowrap;text-align:center;">05</div>
<div style="position:absolute;left:1301.5700000000002px;top:211px;width:1px;height:15px;background:#d4d4d4;"></div>
<div style="position:absolute;left:1035.955px;width:600px;top:209.0px;height:20px;line-height:20px;font-size:12px;color:#222;font-weight:400;white-space:nowrap;text-align:center;">06</div>
<div style="position:absolute;left:1324.1599999999999px;top:211px;width:1px;height:15px;background:#d4d4d4;"></div>
<div style="position:absolute;left:1058.545px;width:600px;top:209.0px;height:20px;line-height:20px;font-size:12px;color:#222;font-weight:400;white-space:nowrap;text-align:center;">07</div>
<div style="position:absolute;left:1346.75px;top:211px;width:1px;height:15px;background:#d4d4d4;"></div>
<div style="position:absolute;left:1081.1350000000002px;width:600px;top:209.0px;height:20px;line-height:20px;font-size:12px;color:#222;font-weight:400;white-space:nowrap;text-align:center;">08</div>
<div style="position:absolute;left:1369.3400000000001px;top:211px;width:1px;height:15px;background:#d4d4d4;"></div>
<div style="position:absolute;left:1103.7250000000001px;width:600px;top:209.0px;height:20px;line-height:20px;font-size:12px;color:#222;font-weight:400;white-space:nowrap;text-align:center;">09</div>
<div style="position:absolute;left:1391.93px;top:211px;width:1px;height:15px;background:#d4d4d4;"></div>
<div style="position:absolute;left:1126.315px;width:600px;top:209.0px;height:20px;line-height:20px;font-size:12px;color:#222;font-weight:400;white-space:nowrap;text-align:center;">10</div>
<div style="position:absolute;left:1414.52px;top:211px;width:1px;height:15px;background:#d4d4d4;"></div>
<div style="position:absolute;left:1148.9050000000002px;width:600px;top:209.0px;height:20px;line-height:20px;font-size:12px;color:#222;font-weight:400;white-space:nowrap;text-align:center;">11</div>
<div style="position:absolute;left:1437.1100000000001px;top:211px;width:1px;height:15px;background:#d4d4d4;"></div>
<div style="position:absolute;left:1171.4950000000001px;width:600px;top:209.0px;height:20px;line-height:20px;font-size:12px;color:#222;font-weight:400;white-space:nowrap;text-align:center;">12</div>
<div style="position:absolute;left:1459.7px;top:211px;width:1px;height:15px;background:#d4d4d4;"></div>
<div style="position:absolute;left:1194.085px;width:600px;top:209.0px;height:20px;line-height:20px;font-size:12px;color:#222;font-weight:400;white-space:nowrap;text-align:center;">13</div>
<div style="position:absolute;left:1482.29px;top:211px;width:1px;height:15px;background:#d4d4d4;"></div>
<div style="position:absolute;left:1216.6750000000002px;width:600px;top:209.0px;height:20px;line-height:20px;font-size:12px;color:#222;font-weight:400;white-space:nowrap;text-align:center;">14</div>
<div style="position:absolute;left:1504.88px;top:211px;width:1px;height:15px;background:#d4d4d4;"></div>
<div style="position:absolute;left:1527.47px;top:211px;width:1px;height:15px;background:#d4d4d4;"></div>
<div style="position:absolute;left:556.6px;top:226px;width:971.4px;height:30px;background:#fff;"></div>
<div style="position:absolute;left:1302.0700000000002px;top:226px;width:22.59px;height:30px;background:#e0e0e0;"></div>
<div style="position:absolute;left:1324.6599999999999px;top:226px;width:22.59px;height:30px;background:#e0e0e0;"></div>
<div style="position:absolute;left:669.5500000000001px;top:226px;width:22.59px;height:30px;background:#e0e0e0;"></div>
<div style="position:absolute;left:692.14px;top:226px;width:22.59px;height:30px;background:#e0e0e0;"></div>
<div style="position:absolute;left:1460.2px;top:226px;width:22.59px;height:30px;background:#e0e0e0;"></div>
<div style="position:absolute;left:1482.79px;top:226px;width:22.59px;height:30px;background:#e0e0e0;"></div>
<div style="position:absolute;left:827.6800000000001px;top:226px;width:22.59px;height:30px;background:#e0e0e0;"></div>
<div style="position:absolute;left:850.27px;top:226px;width:22.59px;height:30px;background:#e0e0e0;"></div>
<div style="position:absolute;left:985.81px;top:226px;width:22.59px;height:30px;background:#e0e0e0;"></div>
<div style="position:absolute;left:1008.4000000000001px;top:226px;width:22.59px;height:30px;background:#e0e0e0;"></div>
<div style="position:absolute;left:1143.94px;top:226px;width:22.59px;height:30px;background:#e0e0e0;"></div>
<div style="position:absolute;left:1166.53px;top:226px;width:22.59px;height:30px;background:#e0e0e0;"></div>
<div style="position:absolute;left:556.1px;top:226px;width:1px;height:30px;background:#b4b4b4;"></div>
<div style="position:absolute;left:578.69px;top:226px;width:1px;height:30px;background:#b4b4b4;"></div>
<div style="position:absolute;left:601.28px;top:226px;width:1px;height:30px;background:#b4b4b4;"></div>
<div style="position:absolute;left:623.87px;top:226px;width:1px;height:30px;background:#b4b4b4;"></div>
<div style="position:absolute;left:646.46px;top:226px;width:1px;height:30px;background:#b4b4b4;"></div>
<div style="position:absolute;left:669.0500000000001px;top:226px;width:1px;height:30px;background:#b4b4b4;"></div>
<div style="position:absolute;left:691.64px;top:226px;width:1px;height:30px;background:#b4b4b4;"></div>
<div style="position:absolute;left:714.23px;top:226px;width:1px;height:30px;background:#b4b4b4;"></div>
<div style="position:absolute;left:736.82px;top:226px;width:1px;height:30px;background:#b4b4b4;"></div>
<div style="position:absolute;left:759.4100000000001px;top:226px;width:1px;height:30px;background:#b4b4b4;"></div>
<div style="position:absolute;left:782.0px;top:226px;width:1px;height:30px;background:#b4b4b4;"></div>
<div style="position:absolute;left:804.59px;top:226px;width:1px;height:30px;background:#b4b4b4;"></div>
<div style="position:absolute;left:827.1800000000001px;top:226px;width:1px;height:30px;background:#b4b4b4;"></div>
<div style="position:absolute;left:849.77px;top:226px;width:1px;height:30px;background:#b4b4b4;"></div>
<div style="position:absolute;left:872.36px;top:226px;width:1px;height:30px;background:#b4b4b4;"></div>
<div style="position:absolute;left:894.95px;top:226px;width:1px;height:30px;background:#b4b4b4;"></div>
<div style="position:absolute;left:917.54px;top:226px;width:1px;height:30px;background:#b4b4b4;"></div>
<div style="position:absolute;left:940.13px;top:226px;width:1px;height:30px;background:#b4b4b4;"></div>
<div style="position:absolute;left:962.72px;top:226px;width:1px;height:30px;background:#b4b4b4;"></div>
<div style="position:absolute;left:985.31px;top:226px;width:1px;height:30px;background:#b4b4b4;"></div>
<div style="position:absolute;left:1007.9000000000001px;top:226px;width:1px;height:30px;background:#b4b4b4;"></div>
<div style="position:absolute;left:1030.49px;top:226px;width:1px;height:30px;background:#b4b4b4;"></div>
<div style="position:absolute;left:1053.08px;top:226px;width:1px;height:30px;background:#b4b4b4;"></div>
<div style="position:absolute;left:1075.67px;top:226px;width:1px;height:30px;background:#b4b4b4;"></div>
<div style="position:absolute;left:1098.26px;top:226px;width:1px;height:30px;background:#b4b4b4;"></div>
<div style="position:absolute;left:1120.85px;top:226px;width:1px;height:30px;background:#b4b4b4;"></div>
<div style="position:absolute;left:1143.44px;top:226px;width:1px;height:30px;background:#b4b4b4;"></div>
<div style="position:absolute;left:1166.03px;top:226px;width:1px;height:30px;background:#b4b4b4;"></div>
<div style="position:absolute;left:1188.62px;top:226px;width:1px;height:30px;background:#b4b4b4;"></div>
<div style="position:absolute;left:1211.21px;top:226px;width:1px;height:30px;background:#b4b4b4;"></div>
<div style="position:absolute;left:1233.8000000000002px;top:226px;width:1px;height:30px;background:#b4b4b4;"></div>
<div style="position:absolute;left:1256.3899999999999px;top:226px;width:1px;height:30px;background:#b4b4b4;"></div>
<div style="position:absolute;left:1278.98px;top:226px;width:1px;height:30px;background:#b4b4b4;"></div>
<div style="position:absolute;left:1301.5700000000002px;top:226px;width:1px;height:30px;background:#b4b4b4;"></div>
<div style="position:absolute;left:1324.1599999999999px;top:226px;width:1px;height:30px;background:#b4b4b4;"></div>
<div style="position:absolute;left:1346.75px;top:226px;width:1px;height:30px;background:#b4b4b4;"></div>
<div style="position:absolute;left:1369.3400000000001px;top:226px;width:1px;height:30px;background:#b4b4b4;"></div>
<div style="position:absolute;left:1391.93px;top:226px;width:1px;height:30px;background:#b4b4b4;"></div>
<div style="position:absolute;left:1414.52px;top:226px;width:1px;height:30px;background:#b4b4b4;"></div>
<div style="position:absolute;left:1437.1100000000001px;top:226px;width:1px;height:30px;background:#b4b4b4;"></div>
<div style="position:absolute;left:1459.7px;top:226px;width:1px;height:30px;background:#b4b4b4;"></div>
<div style="position:absolute;left:1482.29px;top:226px;width:1px;height:30px;background:#b4b4b4;"></div>
<div style="position:absolute;left:1504.88px;top:226px;width:1px;height:30px;background:#b4b4b4;"></div>
<div style="position:absolute;left:1527.47px;top:226px;width:1px;height:30px;background:#b4b4b4;"></div>
<div style="position:absolute;left:556.6px;top:225.5px;width:971.4px;height:1px;background:#9a9a9a;"></div>
<div style="position:absolute;left:556.6px;top:255.5px;width:971.4px;height:1px;background:#9a9a9a;"></div>
<div style="position:absolute;left:378.5px;top:226.8px;width:177.60000000000002px;height:28.4px;background:#efefef;box-shadow:inset 0 1px 0 #fff, inset 1px 0 0 #fff;"></div>
<svg style="position:absolute;left:381px;top:229.3px" width="22.5" height="22.7" viewBox="0 0 30 30" preserveAspectRatio="none"><defs><clipPath id="cp"><rect x="0" y="0" width="30" height="30" rx="5"/></clipPath></defs><g clip-path="url(#cp)"><rect width="30" height="30" fill="#c3c6cb"/><path d="M3,30 Q4,23 10,22 L15,24 L20,22 Q26,23 27,30 Z" fill="#e4e2e2"/><path d="M12,19 H18 V23 L15,25 L12,23 Z" fill="#c99a85"/><ellipse cx="15" cy="13.5" rx="6.2" ry="8" fill="#d2a08a"/><path d="M8.5,12 Q8,4 15,4 Q22,4 21.5,12 Q21,8 15,8.5 Q9,8 8.5,12 Z" fill="#2b2522"/><path d="M9,12.6 H21" stroke="#2a2a2a" stroke-width="0.7"/><rect x="9.6" y="11.8" width="4.6" height="3.2" rx="0.8" fill="none" stroke="#2a2a2a" stroke-width="0.8"/><rect x="15.8" y="11.8" width="4.6" height="3.2" rx="0.8" fill="none" stroke="#2a2a2a" stroke-width="0.8"/><path d="M12.5,18.5 Q15,19.8 17.5,18.5" stroke="#9a5e50" stroke-width="0.9" fill="none"/></g><rect x="0.4" y="0.4" width="29.2" height="29.2" rx="5" fill="none" stroke="#9d9d9d" stroke-width="0.8"/></svg>
<div style="position:absolute;left:408px;top:230.2px;height:20px;line-height:20px;font-size:10px;color:#111;font-weight:400;white-space:nowrap;letter-spacing:-0.3px;-webkit-text-stroke:0.2px #111;">Buchmayr Roland (BRO)</div>
<div style="position:absolute;left:377.5px;top:225.5px;width:180.10000000000002px;height:1px;background:#888;"></div>
<div style="position:absolute;left:377.5px;top:255.5px;width:180.10000000000002px;height:1px;background:#888;"></div>
<div style="position:absolute;left:377.5px;top:226px;width:1px;height:30px;background:#8a8a8a;"></div>
<div style="position:absolute;left:557px;top:226px;width:1px;height:30px;background:#8a8a8a;"></div>
<div style="position:absolute;left:1527.5px;top:226px;width:1px;height:30px;background:#9e9e9e;"></div>
<div style="position:absolute;left:565.3px;top:226px;width:1.5px;height:30px;background:repeating-linear-gradient(to bottom,#c8304f 0 4px,transparent 4px 6px);"></div>
<div style="position:absolute;left:569.5px;top:220.8px;height:20px;line-height:20px;font-size:8.4px;color:#d0202c;font-weight:400;white-space:nowrap;-webkit-text-stroke:0.2px #d0202c;">Heute</div>
<div style="position:absolute;left:714px;top:229px;width:114px;height:23px;background:rgba(168,200,240,0.78);border:1.5px dashed #5a6a80;box-sizing:border-box;"></div>
<svg style="position:absolute;left:721px;top:234.5px" width="14" height="13"><path d="M7.5,2.5 H3 Q1.5,2.5 1.5,4 V10 Q1.5,11.5 3,11.5 H9 Q10.5,11.5 10.5,10 V7" fill="none" stroke="#5d6c86" stroke-width="1.3"/><path d="M5.5,8.5 L6,6.5 L11,1.5 L12.5,3 L7.5,8 Z" fill="#5d6c86"/></svg>
<div style="position:absolute;left:471px;width:600px;top:230.5px;height:20px;line-height:20px;font-size:13px;color:#111;font-weight:400;white-space:nowrap;text-align:center;">Urlaub</div>
<div style="position:absolute;left:370px;top:280px;width:1166px;height:29.5px;background:#dcdcdc;"></div>
<div style="position:absolute;left:370px;top:308px;width:1166px;height:1.5px;background:#e0e0e0;"></div>
<div style="position:absolute;left:370px;top:309.5px;width:1166px;height:1.5px;background:#b5b5b5;"></div>
<div style="position:absolute;left:370px;top:311px;width:1166px;height:222px;background:#fff;border-radius:0 0 4px 4px;"></div>
<div style="position:absolute;left:379px;top:285.0px;height:20px;line-height:20px;font-size:14.2px;color:#111;font-weight:400;white-space:nowrap;">Gruppenleiter - Abwesenheiten</div>
<div style="position:absolute;left:818.7px;width:600px;top:285.5px;height:20px;line-height:20px;font-size:14px;color:#1d3a50;font-weight:400;white-space:nowrap;text-align:right;">03.07.2017</div>
<div style="position:absolute;left:1436px;top:286.5px;height:20px;line-height:20px;font-size:12px;color:#a8a8a8;font-weight:400;white-space:nowrap;">3 Monate</div>
<svg style="position:absolute;left:1497px;top:288.5px" width="34" height="14"><path d="M7,2 V12 M2,7 H12" stroke="#9a9a9a" stroke-width="2.6"/><rect x="17.5" y="2.5" width="12" height="9" fill="none" stroke="#a8a8a8" stroke-width="1.2"/><path d="M17.5,5.5 H29.5" stroke="#a8a8a8" stroke-width="1.4"/><path d="M20,8.5 H27" stroke="#c8c8c8" stroke-width="1"/></svg>
<div style="position:absolute;left:377.5px;top:319px;width:1150.5px;height:46.5px;background:#fff;border:1px solid #a3a3a3;box-sizing:border-box;"></div>
<div style="position:absolute;left:404px;top:320px;width:533px;height:44.5px;background:#d9d9f9;border-left:1.5px solid #5c5cd0;border-right:1px solid #8080d0;box-sizing:border-box;"></div>
<div style="position:absolute;left:408px;top:320px;width:1.5px;height:44.5px;background:repeating-linear-gradient(to bottom,#c2305a 0 4px,transparent 4px 6px);"></div>
<div style="position:absolute;left:947px;top:320px;width:12px;height:44.5px;background:#d9a299;"></div>
<div style="position:absolute;left:492px;top:321px;width:63.5px;height:9px;background:#aabaf0;border:1.5px dashed #55607a;box-sizing:border-box;border-radius:3px;"></div>
<div style="position:absolute;left:409px;top:344px;width:13px;height:8.5px;background:#9ccfaa;border:1.5px dashed #55607a;box-sizing:border-box;border-radius:3px;"></div>
<div style="position:absolute;left:580px;top:355px;width:152px;height:9px;background:#9ccfaa;border:1.5px dashed #55607a;box-sizing:border-box;border-radius:3px;"></div>
<div style="position:absolute;left:845px;top:332px;width:241px;height:9px;background:#aabcec;border:1.5px dashed #55607a;box-sizing:border-box;border-radius:3px;"></div>
<div style="position:absolute;left:558.2px;top:374px;width:1.2px;height:13.5px;background:#333;"></div>
<div style="position:absolute;left:1211.5px;top:374px;width:1.2px;height:13.5px;background:#333;"></div>
<div style="position:absolute;left:584.7px;width:600px;top:371.5px;height:20px;line-height:20px;font-size:11.2px;color:#222;font-weight:400;white-space:nowrap;text-align:center;">Juli 2017</div>
<div style="position:absolute;left:1081px;width:600px;top:371.5px;height:20px;line-height:20px;font-size:11.2px;color:#222;font-weight:400;white-space:nowrap;text-align:center;">August 2017</div>
<div style="position:absolute;left:267.895px;width:600px;top:387.0px;height:20px;line-height:20px;font-size:12px;color:#222;font-weight:400;white-space:nowrap;text-align:center;">03</div>
<div style="position:absolute;left:290.485px;width:600px;top:387.0px;height:20px;line-height:20px;font-size:12px;color:#222;font-weight:400;white-space:nowrap;text-align:center;">04</div>
<div style="position:absolute;left:578.69px;top:389px;width:1px;height:15.5px;background:#d4d4d4;"></div>
<div style="position:absolute;left:313.07499999999993px;width:600px;top:387.0px;height:20px;line-height:20px;font-size:12px;color:#222;font-weight:400;white-space:nowrap;text-align:center;">05</div>
<div style="position:absolute;left:601.28px;top:389px;width:1px;height:15.5px;background:#d4d4d4;"></div>
<div style="position:absolute;left:335.66499999999996px;width:600px;top:387.0px;height:20px;line-height:20px;font-size:12px;color:#222;font-weight:400;white-space:nowrap;text-align:center;">06</div>
<div style="position:absolute;left:623.87px;top:389px;width:1px;height:15.5px;background:#d4d4d4;"></div>
<div style="position:absolute;left:358.255px;width:600px;top:387.0px;height:20px;line-height:20px;font-size:12px;color:#222;font-weight:400;white-space:nowrap;text-align:center;">07</div>
<div style="position:absolute;left:646.46px;top:389px;width:1px;height:15.5px;background:#d4d4d4;"></div>
<div style="position:absolute;left:380.845px;width:600px;top:387.0px;height:20px;line-height:20px;font-size:12px;color:#222;font-weight:400;white-space:nowrap;text-align:center;">08</div>
<div style="position:absolute;left:669.0500000000001px;top:389px;width:1px;height:15.5px;background:#d4d4d4;"></div>
<div style="position:absolute;left:403.43499999999995px;width:600px;top:387.0px;height:20px;line-height:20px;font-size:12px;color:#222;font-weight:400;white-space:nowrap;text-align:center;">09</div>
<div style="position:absolute;left:691.64px;top:389px;width:1px;height:15.5px;background:#d4d4d4;"></div>
<div style="position:absolute;left:426.025px;width:600px;top:387.0px;height:20px;line-height:20px;font-size:12px;color:#222;font-weight:400;white-space:nowrap;text-align:center;">10</div>
<div style="position:absolute;left:714.23px;top:389px;width:1px;height:15.5px;background:#d4d4d4;"></div>
<div style="position:absolute;left:448.615px;width:600px;top:387.0px;height:20px;line-height:20px;font-size:12px;color:#222;font-weight:400;white-space:nowrap;text-align:center;">11</div>
<div style="position:absolute;left:736.82px;top:389px;width:1px;height:15.5px;background:#d4d4d4;"></div>
<div style="position:absolute;left:471.20500000000004px;width:600px;top:387.0px;height:20px;line-height:20px;font-size:12px;color:#222;font-weight:400;white-space:nowrap;text-align:center;">12</div>
<div style="position:absolute;left:759.4100000000001px;top:389px;width:1px;height:15.5px;background:#d4d4d4;"></div>
<div style="position:absolute;left:493.79499999999996px;width:600px;top:387.0px;height:20px;line-height:20px;font-size:12px;color:#222;font-weight:400;white-space:nowrap;text-align:center;">13</div>
<div style="position:absolute;left:782.0px;top:389px;width:1px;height:15.5px;background:#d4d4d4;"></div>
<div style="position:absolute;left:516.385px;width:600px;top:387.0px;height:20px;line-height:20px;font-size:12px;color:#222;font-weight:400;white-space:nowrap;text-align:center;">14</div>
<div style="position:absolute;left:804.59px;top:389px;width:1px;height:15.5px;background:#d4d4d4;"></div>
<div style="position:absolute;left:538.975px;width:600px;top:387.0px;height:20px;line-height:20px;font-size:12px;color:#222;font-weight:400;white-space:nowrap;text-align:center;">15</div>
<div style="position:absolute;left:827.1800000000001px;top:389px;width:1px;height:15.5px;background:#d4d4d4;"></div>
<div style="position:absolute;left:561.5649999999999px;width:600px;top:387.0px;height:20px;line-height:20px;font-size:12px;color:#222;font-weight:400;white-space:nowrap;text-align:center;">16</div>
<div style="position:absolute;left:849.77px;top:389px;width:1px;height:15.5px;background:#d4d4d4;"></div>
<div style="position:absolute;left:584.155px;width:600px;top:387.0px;height:20px;line-height:20px;font-size:12px;color:#222;font-weight:400;white-space:nowrap;text-align:center;">17</div>
<div style="position:absolute;left:872.36px;top:389px;width:1px;height:15.5px;background:#d4d4d4;"></div>
<div style="position:absolute;left:606.745px;width:600px;top:387.0px;height:20px;line-height:20px;font-size:12px;color:#222;font-weight:400;white-space:nowrap;text-align:center;">18</div>
<div style="position:absolute;left:894.95px;top:389px;width:1px;height:15.5px;background:#d4d4d4;"></div>
<div style="position:absolute;left:629.3349999999999px;width:600px;top:387.0px;height:20px;line-height:20px;font-size:12px;color:#222;font-weight:400;white-space:nowrap;text-align:center;">19</div>
<div style="position:absolute;left:917.54px;top:389px;width:1px;height:15.5px;background:#d4d4d4;"></div>
<div style="position:absolute;left:651.925px;width:600px;top:387.0px;height:20px;line-height:20px;font-size:12px;color:#222;font-weight:400;white-space:nowrap;text-align:center;">20</div>
<div style="position:absolute;left:940.13px;top:389px;width:1px;height:15.5px;background:#d4d4d4;"></div>
<div style="position:absolute;left:674.515px;width:600px;top:387.0px;height:20px;line-height:20px;font-size:12px;color:#222;font-weight:400;white-space:nowrap;text-align:center;">21</div>
<div style="position:absolute;left:962.72px;top:389px;width:1px;height:15.5px;background:#d4d4d4;"></div>
<div style="position:absolute;left:697.1049999999999px;width:600px;top:387.0px;height:20px;line-height:20px;font-size:12px;color:#222;font-weight:400;white-space:nowrap;text-align:center;">22</div>
<div style="position:absolute;left:985.31px;top:389px;width:1px;height:15.5px;background:#d4d4d4;"></div>
<div style="position:absolute;left:719.695px;width:600px;top:387.0px;height:20px;line-height:20px;font-size:12px;color:#222;font-weight:400;white-space:nowrap;text-align:center;">23</div>
<div style="position:absolute;left:1007.9000000000001px;top:389px;width:1px;height:15.5px;background:#d4d4d4;"></div>
<div style="position:absolute;left:742.2850000000001px;width:600px;top:387.0px;height:20px;line-height:20px;font-size:12px;color:#222;font-weight:400;white-space:nowrap;text-align:center;">24</div>
<div style="position:absolute;left:1030.49px;top:389px;width:1px;height:15.5px;background:#d4d4d4;"></div>
<div style="position:absolute;left:764.875px;width:600px;top:387.0px;height:20px;line-height:20px;font-size:12px;color:#222;font-weight:400;white-space:nowrap;text-align:center;">25</div>
<div style="position:absolute;left:1053.08px;top:389px;width:1px;height:15.5px;background:#d4d4d4;"></div>
<div style="position:absolute;left:787.4650000000001px;width:600px;top:387.0px;height:20px;line-height:20px;font-size:12px;color:#222;font-weight:400;white-space:nowrap;text-align:center;">26</div>
<div style="position:absolute;left:1075.67px;top:389px;width:1px;height:15.5px;background:#d4d4d4;"></div>
<div style="position:absolute;left:810.0550000000001px;width:600px;top:387.0px;height:20px;line-height:20px;font-size:12px;color:#222;font-weight:400;white-space:nowrap;text-align:center;">27</div>
<div style="position:absolute;left:1098.26px;top:389px;width:1px;height:15.5px;background:#d4d4d4;"></div>
<div style="position:absolute;left:832.645px;width:600px;top:387.0px;height:20px;line-height:20px;font-size:12px;color:#222;font-weight:400;white-space:nowrap;text-align:center;">28</div>
<div style="position:absolute;left:1120.85px;top:389px;width:1px;height:15.5px;background:#d4d4d4;"></div>
<div style="position:absolute;left:855.2350000000001px;width:600px;top:387.0px;height:20px;line-height:20px;font-size:12px;color:#222;font-weight:400;white-space:nowrap;text-align:center;">29</div>
<div style="position:absolute;left:1143.44px;top:389px;width:1px;height:15.5px;background:#d4d4d4;"></div>
<div style="position:absolute;left:877.825px;width:600px;top:387.0px;height:20px;line-height:20px;font-size:12px;color:#222;font-weight:400;white-space:nowrap;text-align:center;">30</div>
<div style="position:absolute;left:1166.03px;top:389px;width:1px;height:15.5px;background:#d4d4d4;"></div>
<div style="position:absolute;left:900.415px;width:600px;top:387.0px;height:20px;line-height:20px;font-size:12px;color:#222;font-weight:400;white-space:nowrap;text-align:center;">31</div>
<div style="position:absolute;left:1188.62px;top:389px;width:1px;height:15.5px;background:#d4d4d4;"></div>
<div style="position:absolute;left:923.0050000000001px;width:600px;top:387.0px;height:20px;line-height:20px;font-size:12px;color:#222;font-weight:400;white-space:nowrap;text-align:center;">01</div>
<div style="position:absolute;left:1211.21px;top:389px;width:1px;height:15.5px;background:#d4d4d4;"></div>
<div style="position:absolute;left:945.5950000000003px;width:600px;top:387.0px;height:20px;line-height:20px;font-size:12px;color:#222;font-weight:400;white-space:nowrap;text-align:center;">02</div>
<div style="position:absolute;left:1233.8000000000002px;top:389px;width:1px;height:15.5px;background:#d4d4d4;"></div>
<div style="position:absolute;left:968.185px;width:600px;top:387.0px;height:20px;line-height:20px;font-size:12px;color:#222;font-weight:400;white-space:nowrap;text-align:center;">03</div>
<div style="position:absolute;left:1256.3899999999999px;top:389px;width:1px;height:15.5px;background:#d4d4d4;"></div>
<div style="position:absolute;left:990.7750000000001px;width:600px;top:387.0px;height:20px;line-height:20px;font-size:12px;color:#222;font-weight:400;white-space:nowrap;text-align:center;">04</div>
<div style="position:absolute;left:1278.98px;top:389px;width:1px;height:15.5px;background:#d4d4d4;"></div>
<div style="position:absolute;left:1013.3650000000002px;width:600px;top:387.0px;height:20px;line-height:20px;font-size:12px;color:#222;font-weight:400;white-space:nowrap;text-align:center;">05</div>
<div style="position:absolute;left:1301.5700000000002px;top:389px;width:1px;height:15.5px;background:#d4d4d4;"></div>
<div style="position:absolute;left:1035.955px;width:600px;top:387.0px;height:20px;line-height:20px;font-size:12px;color:#222;font-weight:400;white-space:nowrap;text-align:center;">06</div>
<div style="position:absolute;left:1324.1599999999999px;top:389px;width:1px;height:15.5px;background:#d4d4d4;"></div>
<div style="position:absolute;left:1058.545px;width:600px;top:387.0px;height:20px;line-height:20px;font-size:12px;color:#222;font-weight:400;white-space:nowrap;text-align:center;">07</div>
<div style="position:absolute;left:1346.75px;top:389px;width:1px;height:15.5px;background:#d4d4d4;"></div>
<div style="position:absolute;left:1081.1350000000002px;width:600px;top:387.0px;height:20px;line-height:20px;font-size:12px;color:#222;font-weight:400;white-space:nowrap;text-align:center;">08</div>
<div style="position:absolute;left:1369.3400000000001px;top:389px;width:1px;height:15.5px;background:#d4d4d4;"></div>
<div style="position:absolute;left:1103.7250000000001px;width:600px;top:387.0px;height:20px;line-height:20px;font-size:12px;color:#222;font-weight:400;white-space:nowrap;text-align:center;">09</div>
<div style="position:absolute;left:1391.93px;top:389px;width:1px;height:15.5px;background:#d4d4d4;"></div>
<div style="position:absolute;left:1126.315px;width:600px;top:387.0px;height:20px;line-height:20px;font-size:12px;color:#222;font-weight:400;white-space:nowrap;text-align:center;">10</div>
<div style="position:absolute;left:1414.52px;top:389px;width:1px;height:15.5px;background:#d4d4d4;"></div>
<div style="position:absolute;left:1148.9050000000002px;width:600px;top:387.0px;height:20px;line-height:20px;font-size:12px;color:#222;font-weight:400;white-space:nowrap;text-align:center;">11</div>
<div style="position:absolute;left:1437.1100000000001px;top:389px;width:1px;height:15.5px;background:#d4d4d4;"></div>
<div style="position:absolute;left:1171.4950000000001px;width:600px;top:387.0px;height:20px;line-height:20px;font-size:12px;color:#222;font-weight:400;white-space:nowrap;text-align:center;">12</div>
<div style="position:absolute;left:1459.7px;top:389px;width:1px;height:15.5px;background:#d4d4d4;"></div>
<div style="position:absolute;left:1194.085px;width:600px;top:387.0px;height:20px;line-height:20px;font-size:12px;color:#222;font-weight:400;white-space:nowrap;text-align:center;">13</div>
<div style="position:absolute;left:1482.29px;top:389px;width:1px;height:15.5px;background:#d4d4d4;"></div>
<div style="position:absolute;left:1216.6750000000002px;width:600px;top:387.0px;height:20px;line-height:20px;font-size:12px;color:#222;font-weight:400;white-space:nowrap;text-align:center;">14</div>
<div style="position:absolute;left:1504.88px;top:389px;width:1px;height:15.5px;background:#d4d4d4;"></div>
<div style="position:absolute;left:1527.47px;top:389px;width:1px;height:15.5px;background:#d4d4d4;"></div>
<div style="position:absolute;left:556.6px;top:404.5px;width:955.4px;height:120px;background:#fff;"></div>
<div style="position:absolute;left:1302.0700000000002px;top:404.5px;width:22.59px;height:120px;background:#e0e0e0;"></div>
<div style="position:absolute;left:1324.6599999999999px;top:404.5px;width:22.59px;height:120px;background:#e0e0e0;"></div>
<div style="position:absolute;left:669.5500000000001px;top:404.5px;width:22.59px;height:120px;background:#e0e0e0;"></div>
<div style="position:absolute;left:692.14px;top:404.5px;width:22.59px;height:120px;background:#e0e0e0;"></div>
<div style="position:absolute;left:1460.2px;top:404.5px;width:22.59px;height:120px;background:#e0e0e0;"></div>
<div style="position:absolute;left:1482.79px;top:404.5px;width:22.59px;height:120px;background:#e0e0e0;"></div>
<div style="position:absolute;left:827.6800000000001px;top:404.5px;width:22.59px;height:120px;background:#e0e0e0;"></div>
<div style="position:absolute;left:850.27px;top:404.5px;width:22.59px;height:120px;background:#e0e0e0;"></div>
<div style="position:absolute;left:985.81px;top:404.5px;width:22.59px;height:120px;background:#e0e0e0;"></div>
<div style="position:absolute;left:1008.4000000000001px;top:404.5px;width:22.59px;height:120px;background:#e0e0e0;"></div>
<div style="position:absolute;left:1143.94px;top:404.5px;width:22.59px;height:120px;background:#e0e0e0;"></div>
<div style="position:absolute;left:1166.53px;top:404.5px;width:22.59px;height:120px;background:#e0e0e0;"></div>
<div style="position:absolute;left:556.1px;top:404.5px;width:1px;height:120px;background:#b4b4b4;"></div>
<div style="position:absolute;left:578.69px;top:404.5px;width:1px;height:120px;background:#b4b4b4;"></div>
<div style="position:absolute;left:601.28px;top:404.5px;width:1px;height:120px;background:#b4b4b4;"></div>
<div style="position:absolute;left:623.87px;top:404.5px;width:1px;height:120px;background:#b4b4b4;"></div>
<div style="position:absolute;left:646.46px;top:404.5px;width:1px;height:120px;background:#b4b4b4;"></div>
<div style="position:absolute;left:669.0500000000001px;top:404.5px;width:1px;height:120px;background:#b4b4b4;"></div>
<div style="position:absolute;left:691.64px;top:404.5px;width:1px;height:120px;background:#b4b4b4;"></div>
<div style="position:absolute;left:714.23px;top:404.5px;width:1px;height:120px;background:#b4b4b4;"></div>
<div style="position:absolute;left:736.82px;top:404.5px;width:1px;height:120px;background:#b4b4b4;"></div>
<div style="position:absolute;left:759.4100000000001px;top:404.5px;width:1px;height:120px;background:#b4b4b4;"></div>
<div style="position:absolute;left:782.0px;top:404.5px;width:1px;height:120px;background:#b4b4b4;"></div>
<div style="position:absolute;left:804.59px;top:404.5px;width:1px;height:120px;background:#b4b4b4;"></div>
<div style="position:absolute;left:827.1800000000001px;top:404.5px;width:1px;height:120px;background:#b4b4b4;"></div>
<div style="position:absolute;left:849.77px;top:404.5px;width:1px;height:120px;background:#b4b4b4;"></div>
<div style="position:absolute;left:872.36px;top:404.5px;width:1px;height:120px;background:#b4b4b4;"></div>
<div style="position:absolute;left:894.95px;top:404.5px;width:1px;height:120px;background:#b4b4b4;"></div>
<div style="position:absolute;left:917.54px;top:404.5px;width:1px;height:120px;background:#b4b4b4;"></div>
<div style="position:absolute;left:940.13px;top:404.5px;width:1px;height:120px;background:#b4b4b4;"></div>
<div style="position:absolute;left:962.72px;top:404.5px;width:1px;height:120px;background:#b4b4b4;"></div>
<div style="position:absolute;left:985.31px;top:404.5px;width:1px;height:120px;background:#b4b4b4;"></div>
<div style="position:absolute;left:1007.9000000000001px;top:404.5px;width:1px;height:120px;background:#b4b4b4;"></div>
<div style="position:absolute;left:1030.49px;top:404.5px;width:1px;height:120px;background:#b4b4b4;"></div>
<div style="position:absolute;left:1053.08px;top:404.5px;width:1px;height:120px;background:#b4b4b4;"></div>
<div style="position:absolute;left:1075.67px;top:404.5px;width:1px;height:120px;background:#b4b4b4;"></div>
<div style="position:absolute;left:1098.26px;top:404.5px;width:1px;height:120px;background:#b4b4b4;"></div>
<div style="position:absolute;left:1120.85px;top:404.5px;width:1px;height:120px;background:#b4b4b4;"></div>
<div style="position:absolute;left:1143.44px;top:404.5px;width:1px;height:120px;background:#b4b4b4;"></div>
<div style="position:absolute;left:1166.03px;top:404.5px;width:1px;height:120px;background:#b4b4b4;"></div>
<div style="position:absolute;left:1188.62px;top:404.5px;width:1px;height:120px;background:#b4b4b4;"></div>
<div style="position:absolute;left:1211.21px;top:404.5px;width:1px;height:120px;background:#b4b4b4;"></div>
<div style="position:absolute;left:1233.8000000000002px;top:404.5px;width:1px;height:120px;background:#b4b4b4;"></div>
<div style="position:absolute;left:1256.3899999999999px;top:404.5px;width:1px;height:120px;background:#b4b4b4;"></div>
<div style="position:absolute;left:1278.98px;top:404.5px;width:1px;height:120px;background:#b4b4b4;"></div>
<div style="position:absolute;left:1301.5700000000002px;top:404.5px;width:1px;height:120px;background:#b4b4b4;"></div>
<div style="position:absolute;left:1324.1599999999999px;top:404.5px;width:1px;height:120px;background:#b4b4b4;"></div>
<div style="position:absolute;left:1346.75px;top:404.5px;width:1px;height:120px;background:#b4b4b4;"></div>
<div style="position:absolute;left:1369.3400000000001px;top:404.5px;width:1px;height:120px;background:#b4b4b4;"></div>
<div style="position:absolute;left:1391.93px;top:404.5px;width:1px;height:120px;background:#b4b4b4;"></div>
<div style="position:absolute;left:1414.52px;top:404.5px;width:1px;height:120px;background:#b4b4b4;"></div>
<div style="position:absolute;left:1437.1100000000001px;top:404.5px;width:1px;height:120px;background:#b4b4b4;"></div>
<div style="position:absolute;left:1459.7px;top:404.5px;width:1px;height:120px;background:#b4b4b4;"></div>
<div style="position:absolute;left:1482.29px;top:404.5px;width:1px;height:120px;background:#b4b4b4;"></div>
<div style="position:absolute;left:1504.88px;top:404.5px;width:1px;height:120px;background:#b4b4b4;"></div>
<div style="position:absolute;left:556.6px;top:404.0px;width:955.4px;height:1px;background:#9a9a9a;"></div>
<div style="position:absolute;left:556.6px;top:433.9px;width:955.4px;height:1.2px;background:#a6a6a6;"></div>
<div style="position:absolute;left:556.6px;top:463.9px;width:955.4px;height:1.2px;background:#a6a6a6;"></div>
<div style="position:absolute;left:556.6px;top:493.9px;width:955.4px;height:1.2px;background:#a6a6a6;"></div>
<div style="position:absolute;left:556.6px;top:524.0px;width:955.4px;height:1px;background:#9a9a9a;"></div>
<div style="position:absolute;left:378.5px;top:405.3px;width:177.60000000000002px;height:28.4px;background:#efefef;box-shadow:inset 0 1px 0 #fff, inset 1px 0 0 #fff;"></div>
<svg style="position:absolute;left:381px;top:407.8px" width="22.5" height="22.7" viewBox="0 0 30 30" preserveAspectRatio="none"><defs><clipPath id="cp"><rect x="0" y="0" width="30" height="30" rx="5"/></clipPath></defs><g clip-path="url(#cp)"><rect width="30" height="30" fill="#c3c6cb"/><path d="M3,30 Q4,23 10,22 L15,24 L20,22 Q26,23 27,30 Z" fill="#e4e2e2"/><path d="M12,19 H18 V23 L15,25 L12,23 Z" fill="#c99a85"/><ellipse cx="15" cy="13.5" rx="6.2" ry="8" fill="#d2a08a"/><path d="M8.5,12 Q8,4 15,4 Q22,4 21.5,12 Q21,8 15,8.5 Q9,8 8.5,12 Z" fill="#2b2522"/><path d="M9,12.6 H21" stroke="#2a2a2a" stroke-width="0.7"/><rect x="9.6" y="11.8" width="4.6" height="3.2" rx="0.8" fill="none" stroke="#2a2a2a" stroke-width="0.8"/><rect x="15.8" y="11.8" width="4.6" height="3.2" rx="0.8" fill="none" stroke="#2a2a2a" stroke-width="0.8"/><path d="M12.5,18.5 Q15,19.8 17.5,18.5" stroke="#9a5e50" stroke-width="0.9" fill="none"/></g><rect x="0.4" y="0.4" width="29.2" height="29.2" rx="5" fill="none" stroke="#9d9d9d" stroke-width="0.8"/></svg>
<div style="position:absolute;left:408px;top:408.7px;height:20px;line-height:20px;font-size:10px;color:#111;font-weight:400;white-space:nowrap;letter-spacing:-0.3px;-webkit-text-stroke:0.2px #111;">Buchmayr Roland (BRO)</div>
<div style="position:absolute;left:378.5px;top:435.3px;width:177.60000000000002px;height:28.4px;background:#efefef;box-shadow:inset 0 1px 0 #fff, inset 1px 0 0 #fff;"></div>
<svg style="position:absolute;left:381px;top:437.8px" width="22.5" height="22.7" viewBox="0 0 30 30" preserveAspectRatio="none"><defs><clipPath id="cp"><rect x="0" y="0" width="30" height="30" rx="5"/></clipPath></defs><g clip-path="url(#cp)"><rect width="30" height="30" fill="#d9d4cf"/><path d="M2,30 Q1,22 5,16 Q6,4 15,3.5 Q24,4 25,16 Q29,22 28,30 Z" fill="#120e0c"/><path d="M12,22 L15,30 L18,22 Z" fill="#f2efea"/><ellipse cx="15" cy="13" rx="4.8" ry="6.8" fill="#e7c2b0"/><path d="M10,10 Q12,5 17,6 Q14,7 11,11 Z" fill="#120e0c"/><path d="M13.3,17 Q15,18 16.7,17" stroke="#b03030" stroke-width="1.2" fill="none"/></g><rect x="0.4" y="0.4" width="29.2" height="29.2" rx="5" fill="none" stroke="#9d9d9d" stroke-width="0.8"/></svg>
<div style="position:absolute;left:408px;top:438.7px;height:20px;line-height:20px;font-size:10px;color:#111;font-weight:400;white-space:nowrap;letter-spacing:-0.3px;-webkit-text-stroke:0.2px #111;">Frei Jacqueline (FJA)</div>
<div style="position:absolute;left:378.5px;top:465.3px;width:177.60000000000002px;height:28.4px;background:#efefef;box-shadow:inset 0 1px 0 #fff, inset 1px 0 0 #fff;"></div>
<svg style="position:absolute;left:381px;top:467.8px" width="22.5" height="22.7" viewBox="0 0 30 30" preserveAspectRatio="none"><defs><clipPath id="cp"><rect x="0" y="0" width="30" height="30" rx="5"/></clipPath></defs><g clip-path="url(#cp)"><rect width="30" height="30" fill="#cdd0d6"/><path d="M2,30 Q3,23 10,21.5 L15,26 L20,21.5 Q27,23 28,30 Z" fill="#141820"/><path d="M11,21.5 L15,27 L19,21.5 Z" fill="#f4f4f4"/><ellipse cx="15" cy="13.5" rx="6.5" ry="8" fill="#d6a48c"/><path d="M7.8,14 Q7,3.5 15,3.5 Q23,3.5 22.2,13 Q21.5,7.5 15,8 Q9,8 8.6,14 Z" fill="#1e1a18"/><path d="M12,18.5 Q15,20 18,18.5" stroke="#7a4a3a" stroke-width="1" fill="none"/></g><rect x="0.4" y="0.4" width="29.2" height="29.2" rx="5" fill="none" stroke="#9d9d9d" stroke-width="0.8"/></svg>
<div style="position:absolute;left:408px;top:468.7px;height:20px;line-height:20px;font-size:10px;color:#111;font-weight:400;white-space:nowrap;letter-spacing:-0.3px;-webkit-text-stroke:0.2px #111;">Riedmann Uwe (RIU)</div>
<div style="position:absolute;left:378.5px;top:495.3px;width:177.60000000000002px;height:28.4px;background:#efefef;box-shadow:inset 0 1px 0 #fff, inset 1px 0 0 #fff;"></div>
<svg style="position:absolute;left:381px;top:497.8px" width="22.5" height="22.7" viewBox="0 0 30 30" preserveAspectRatio="none"><defs><clipPath id="cp"><rect x="0" y="0" width="30" height="30" rx="5"/></clipPath></defs><g clip-path="url(#cp)"><rect width="30" height="30" fill="#eeeeee"/><path d="M4,30 Q5,23 11,22 L15,23.5 L19,22 Q25,23 26,30 Z" fill="#f7f7f7"/><path d="M14,23.5 L16,23.5 L17,30 L13,30 Z" fill="#1a1a1a"/><ellipse cx="15" cy="13.5" rx="5.8" ry="7.5" fill="#e0b09a"/><path d="M9,12 Q8.5,5 15,5 Q21.5,5 21,12 Q20,8 15,8.5 Q10,8 9,12 Z" fill="#5a4438"/><path d="M12.8,18 Q15,19 17.2,18" stroke="#a04a40" stroke-width="1" fill="none"/></g><rect x="0.4" y="0.4" width="29.2" height="29.2" rx="5" fill="none" stroke="#9d9d9d" stroke-width="0.8"/></svg>
<div style="position:absolute;left:408px;top:498.7px;height:20px;line-height:20px;font-size:10px;color:#111;font-weight:400;white-space:nowrap;letter-spacing:-0.3px;-webkit-text-stroke:0.2px #111;">Stocker Heimo (SHE)</div>
<div style="position:absolute;left:377.5px;top:404.0px;width:180.10000000000002px;height:1px;background:#888;"></div>
<div style="position:absolute;left:377.5px;top:433.7px;width:180.10000000000002px;height:1.6px;background:#7c7c7c;"></div>
<div style="position:absolute;left:377.5px;top:463.7px;width:180.10000000000002px;height:1.6px;background:#7c7c7c;"></div>
<div style="position:absolute;left:377.5px;top:493.7px;width:180.10000000000002px;height:1.6px;background:#7c7c7c;"></div>
<div style="position:absolute;left:377.5px;top:524.0px;width:180.10000000000002px;height:1px;background:#888;"></div>
<div style="position:absolute;left:377.5px;top:404.5px;width:1px;height:120px;background:#8a8a8a;"></div>
<div style="position:absolute;left:557px;top:404.5px;width:1px;height:120px;background:#8a8a8a;"></div>
<div style="position:absolute;left:1511.5px;top:404.5px;width:1px;height:120px;background:#9e9e9e;"></div>
<div style="position:absolute;left:565.3px;top:404.5px;width:1.5px;height:120px;background:repeating-linear-gradient(to bottom,#c8304f 0 4px,transparent 4px 6px);"></div>
<div style="position:absolute;left:569.5px;top:399.0px;height:20px;line-height:20px;font-size:8.4px;color:#d0202c;font-weight:400;white-space:nowrap;-webkit-text-stroke:0.2px #d0202c;">Heute</div>
<div style="position:absolute;left:1512.5px;top:405.5px;width:15.5px;height:118.5px;background:#f3f3f3;border-right:1px solid #dadada;box-sizing:border-box;"></div>
<div style="position:absolute;left:1512.5px;top:523.8px;width:15.5px;height:1px;background:#b0b0b0;"></div>
<svg style="position:absolute;left:1514px;top:408px" width="12" height="10"><path d="M2.5,7 L6,3.5 L9.5,7" fill="none" stroke="#888" stroke-width="1.2"/></svg>
<svg style="position:absolute;left:1514px;top:512px" width="12" height="10"><path d="M2.5,3 L6,6.5 L9.5,3" fill="none" stroke="#888" stroke-width="1.2"/></svg>
<div style="position:absolute;left:714px;top:407.5px;width:114px;height:23px;background:rgba(168,200,240,0.78);border:1.5px dashed #5a6a80;box-sizing:border-box;"></div>
<svg style="position:absolute;left:721px;top:413px" width="14" height="13"><path d="M7.5,2.5 H3 Q1.5,2.5 1.5,4 V10 Q1.5,11.5 3,11.5 H9 Q10.5,11.5 10.5,10 V7" fill="none" stroke="#5d6c86" stroke-width="1.3"/><path d="M5.5,8.5 L6,6.5 L11,1.5 L12.5,3 L7.5,8 Z" fill="#5d6c86"/></svg>
<div style="position:absolute;left:471px;width:600px;top:408.5px;height:20px;line-height:20px;font-size:13px;color:#111;font-weight:400;white-space:nowrap;text-align:center;">Urlaub</div>
<div style="position:absolute;left:1347.5px;top:437.5px;width:165px;height:23px;background:rgba(168,200,240,0.78);border:1.5px dashed #5a6a80;box-sizing:border-box;"></div>
<svg style="position:absolute;left:1354px;top:443px" width="14" height="13"><path d="M7.5,2.5 H3 Q1.5,2.5 1.5,4 V10 Q1.5,11.5 3,11.5 H9 Q10.5,11.5 10.5,10 V7" fill="none" stroke="#5d6c86" stroke-width="1.3"/><path d="M5.5,8.5 L6,6.5 L11,1.5 L12.5,3 L7.5,8 Z" fill="#5d6c86"/></svg>
<div style="position:absolute;left:564px;top:467.5px;width:25px;height:23px;background:rgba(140,225,140,0.85);border:1.5px dashed #4e6e4e;box-sizing:border-box;"></div>
<div style="position:absolute;left:600px;top:468.7px;height:20px;line-height:20px;font-size:12.5px;color:#111;font-weight:400;white-space:nowrap;">Krankenstand</div>
<div style="position:absolute;left:872.8px;top:497.8px;width:271.5px;height:23px;background:rgba(150,222,140,0.85);border:1.5px dashed #4e6e4e;box-sizing:border-box;"></div>
<div style="position:absolute;left:708.5px;width:600px;top:499.0px;height:20px;line-height:20px;font-size:13px;color:#111;font-weight:400;white-space:nowrap;text-align:center;">Urlaub</div>
<div style="position:absolute;left:370px;top:548px;width:1166px;height:30.5px;background:#dcdcdc;"></div>
<div style="position:absolute;left:370px;top:577px;width:1166px;height:1.5px;background:#e0e0e0;"></div>
<div style="position:absolute;left:370px;top:578.5px;width:1166px;height:1.5px;background:#b5b5b5;"></div>
<div style="position:absolute;left:370px;top:580px;width:1166px;height:89.5px;background:#fff;border-radius:0 0 4px 4px;"></div>
<div style="position:absolute;left:379px;top:553.5px;height:20px;line-height:20px;font-size:14.2px;color:#111;font-weight:400;white-space:nowrap;">Meine Buchungen</div>
<div style="position:absolute;left:921px;width:600px;top:553.8px;height:20px;line-height:20px;font-size:14px;color:#1d3a50;font-weight:400;white-space:nowrap;text-align:right;">03.07.2017</div>
<div style="position:absolute;left:377.5px;top:626px;width:1150.5px;height:18px;background:#f9f9f9;"></div>
<div style="position:absolute;left:407px;top:587.8px;height:20px;line-height:20px;font-size:13.6px;color:#222;font-weight:700;white-space:nowrap;">Grund</div>
<div style="position:absolute;left:947px;top:587.8px;height:20px;line-height:20px;font-size:13.6px;color:#222;font-weight:700;white-space:nowrap;">Leistungsart</div>
<div style="position:absolute;left:1145.6px;top:587.8px;height:20px;line-height:20px;font-size:13.6px;color:#222;font-weight:700;white-space:nowrap;">Buchungsdetails</div>
<div style="position:absolute;left:830.5999999999999px;width:600px;top:587.8px;height:20px;line-height:20px;font-size:13.6px;color:#222;font-weight:700;white-space:nowrap;text-align:right;">Anz. Einheiten</div>
<div style="position:absolute;left:1437px;top:587.8px;height:20px;line-height:20px;font-size:13.6px;color:#222;font-weight:700;white-space:nowrap;">Einheit</div>
<svg style="position:absolute;left:381px;top:611px" width="12" height="12"><path d="M2,10 L9.5,2.5" stroke="#a9a9a9" stroke-width="3" stroke-linecap="round"/><path d="M1,11 L2.2,9" stroke="#bbb" stroke-width="1.2"/></svg>
<div style="position:absolute;left:407px;top:607.0px;height:20px;line-height:20px;font-size:11.75px;color:#173a5c;font-weight:400;white-space:nowrap;">INC-1071 Drucker druckt nicht in Farbe und ist sehr langsam</div>
<div style="position:absolute;left:947px;top:607.0px;height:20px;line-height:20px;font-size:11.8px;color:#222;font-weight:400;white-space:nowrap;">Software Entwicklung</div>
<div style="position:absolute;left:1145.6px;top:607.0px;height:20px;line-height:20px;font-size:11.8px;color:#222;font-weight:400;white-space:nowrap;">div. Issues</div>
<div style="position:absolute;left:830.5999999999999px;width:600px;top:607.0px;height:20px;line-height:20px;font-size:11.8px;color:#222;font-weight:400;white-space:nowrap;text-align:right;">1,50</div>
<div style="position:absolute;left:1437px;top:607.0px;height:20px;line-height:20px;font-size:11.8px;color:#222;font-weight:400;white-space:nowrap;">Stunde</div>
<svg style="position:absolute;left:381px;top:629px" width="12" height="12"><path d="M2,10 L9.5,2.5" stroke="#a9a9a9" stroke-width="3" stroke-linecap="round"/><path d="M1,11 L2.2,9" stroke="#bbb" stroke-width="1.2"/></svg>
<div style="position:absolute;left:407px;top:625.0px;height:20px;line-height:20px;font-size:11.75px;color:#173a5c;font-weight:400;white-space:nowrap;">INC-1339 Drucker druckt nicht</div>
<div style="position:absolute;left:947px;top:625.0px;height:20px;line-height:20px;font-size:11.8px;color:#222;font-weight:400;white-space:nowrap;">Projektleitung</div>
<div style="position:absolute;left:1145.6px;top:625.0px;height:20px;line-height:20px;font-size:11.8px;color:#222;font-weight:400;white-space:nowrap;">.</div>
<div style="position:absolute;left:830.5999999999999px;width:600px;top:625.0px;height:20px;line-height:20px;font-size:11.8px;color:#222;font-weight:400;white-space:nowrap;text-align:right;">1,00</div>
<div style="position:absolute;left:1437px;top:625.0px;height:20px;line-height:20px;font-size:11.8px;color:#222;font-weight:400;white-space:nowrap;">Stunde</div>
<svg style="position:absolute;left:381px;top:647px" width="12" height="12"><path d="M2,10 L9.5,2.5" stroke="#a9a9a9" stroke-width="3" stroke-linecap="round"/><path d="M1,11 L2.2,9" stroke="#bbb" stroke-width="1.2"/></svg>
<div style="position:absolute;left:407px;top:643.0px;height:20px;line-height:20px;font-size:11.75px;color:#173a5c;font-weight:400;white-space:nowrap;">CHANGE-74 Aufgabe 2</div>
<div style="position:absolute;left:947px;top:643.0px;height:20px;line-height:20px;font-size:11.8px;color:#222;font-weight:400;white-space:nowrap;">Projektleitung</div>
<div style="position:absolute;left:1145.6px;top:643.0px;height:20px;line-height:20px;font-size:11.8px;color:#222;font-weight:400;white-space:nowrap;">Planung Kickoff</div>
<div style="position:absolute;left:830.5999999999999px;width:600px;top:643.0px;height:20px;line-height:20px;font-size:11.8px;color:#222;font-weight:400;white-space:nowrap;text-align:right;">0,50</div>
<div style="position:absolute;left:1437px;top:643.0px;height:20px;line-height:20px;font-size:11.8px;color:#222;font-weight:400;white-space:nowrap;">Stunde</div>
<div style="position:absolute;left:370px;top:684.5px;width:1166px;height:30.0px;background:#dcdcdc;"></div>
<div style="position:absolute;left:370px;top:713.0px;width:1166px;height:1.5px;background:#e0e0e0;"></div>
<div style="position:absolute;left:370px;top:714.5px;width:1166px;height:1.5px;background:#b5b5b5;"></div>
<div style="position:absolute;left:370px;top:716.0px;width:1166px;height:89.0px;background:#fff;border-radius:0 0 4px 4px;"></div>
<div style="position:absolute;left:379px;top:689.75px;height:20px;line-height:20px;font-size:14.2px;color:#111;font-weight:400;white-space:nowrap;">Gruppenleiter - Buchungen</div>
<div style="position:absolute;left:921px;width:600px;top:690.3px;height:20px;line-height:20px;font-size:14px;color:#1d3a50;font-weight:400;white-space:nowrap;text-align:right;">03.07.2017</div>
<div style="position:absolute;left:377.5px;top:762.6px;width:1150.5px;height:18px;background:#f9f9f9;"></div>
<div style="position:absolute;left:407px;top:724.0px;height:20px;line-height:20px;font-size:13.6px;color:#222;font-weight:700;white-space:nowrap;">Grund</div>
<div style="position:absolute;left:852px;top:724.0px;height:20px;line-height:20px;font-size:13.6px;color:#222;font-weight:700;white-space:nowrap;">Benutzer</div>
<div style="position:absolute;left:1033.5px;top:724.0px;height:20px;line-height:20px;font-size:13.6px;color:#222;font-weight:700;white-space:nowrap;">Leistungsart</div>
<div style="position:absolute;left:1196.4px;top:724.0px;height:20px;line-height:20px;font-size:13.6px;color:#222;font-weight:700;white-space:nowrap;">Buchungsdetails</div>
<div style="position:absolute;left:848px;width:600px;top:724.0px;height:20px;line-height:20px;font-size:13.6px;color:#222;font-weight:700;white-space:nowrap;text-align:right;">Anz. Einheiten</div>
<div style="position:absolute;left:1454px;top:724.0px;height:20px;line-height:20px;font-size:13.6px;color:#222;font-weight:700;white-space:nowrap;">Einheit</div>
<svg style="position:absolute;left:381px;top:747.6px" width="12" height="12"><path d="M2,10 L9.5,2.5" stroke="#a9a9a9" stroke-width="3" stroke-linecap="round"/><path d="M1,11 L2.2,9" stroke="#bbb" stroke-width="1.2"/></svg>
<div style="position:absolute;left:407px;top:743.6px;height:20px;line-height:20px;font-size:11.75px;color:#173a5c;font-weight:400;white-space:nowrap;">INC-1071 Drucker druckt nicht in Farbe und ist sehr langsam</div>
<div style="position:absolute;left:852px;top:743.6px;height:20px;line-height:20px;font-size:11.4px;color:#222;font-weight:400;white-space:nowrap;">Buchmayr Roland (BRO)</div>
<div style="position:absolute;left:1033.5px;top:743.6px;height:20px;line-height:20px;font-size:11.8px;color:#222;font-weight:400;white-space:nowrap;">Software Entwicklung</div>
<div style="position:absolute;left:1196.4px;top:743.6px;height:20px;line-height:20px;font-size:11.8px;color:#222;font-weight:400;white-space:nowrap;">div. Issues</div>
<div style="position:absolute;left:848px;width:600px;top:743.6px;height:20px;line-height:20px;font-size:11.8px;color:#222;font-weight:400;white-space:nowrap;text-align:right;">1,50</div>
<div style="position:absolute;left:1454px;top:743.6px;height:20px;line-height:20px;font-size:11.8px;color:#222;font-weight:400;white-space:nowrap;">Stunde</div>
<svg style="position:absolute;left:381px;top:765.6px" width="12" height="12"><path d="M2,10 L9.5,2.5" stroke="#a9a9a9" stroke-width="3" stroke-linecap="round"/><path d="M1,11 L2.2,9" stroke="#bbb" stroke-width="1.2"/></svg>
<div style="position:absolute;left:407px;top:761.6px;height:20px;line-height:20px;font-size:11.75px;color:#173a5c;font-weight:400;white-space:nowrap;">INC-1339 Drucker druckt nicht</div>
<div style="position:absolute;left:852px;top:761.6px;height:20px;line-height:20px;font-size:11.4px;color:#222;font-weight:400;white-space:nowrap;">Buchmayr Roland (BRO)</div>
<div style="position:absolute;left:1033.5px;top:761.6px;height:20px;line-height:20px;font-size:11.8px;color:#222;font-weight:400;white-space:nowrap;">Projektleitung</div>
<div style="position:absolute;left:1196.4px;top:761.6px;height:20px;line-height:20px;font-size:11.8px;color:#222;font-weight:400;white-space:nowrap;">.</div>
<div style="position:absolute;left:848px;width:600px;top:761.6px;height:20px;line-height:20px;font-size:11.8px;color:#222;font-weight:400;white-space:nowrap;text-align:right;">1,00</div>
<div style="position:absolute;left:1454px;top:761.6px;height:20px;line-height:20px;font-size:11.8px;color:#222;font-weight:400;white-space:nowrap;">Stunde</div>
<svg style="position:absolute;left:381px;top:783.6px" width="12" height="12"><path d="M2,10 L9.5,2.5" stroke="#a9a9a9" stroke-width="3" stroke-linecap="round"/><path d="M1,11 L2.2,9" stroke="#bbb" stroke-width="1.2"/></svg>
<div style="position:absolute;left:407px;top:779.6px;height:20px;line-height:20px;font-size:11.75px;color:#173a5c;font-weight:400;white-space:nowrap;">CHANGE-74 Aufgabe 2</div>
<div style="position:absolute;left:852px;top:779.6px;height:20px;line-height:20px;font-size:11.4px;color:#222;font-weight:400;white-space:nowrap;">Buchmayr Roland (BRO)</div>
<div style="position:absolute;left:1033.5px;top:779.6px;height:20px;line-height:20px;font-size:11.8px;color:#222;font-weight:400;white-space:nowrap;">Projektleitung</div>
<div style="position:absolute;left:1196.4px;top:779.6px;height:20px;line-height:20px;font-size:11.8px;color:#222;font-weight:400;white-space:nowrap;">Planung Kickoff</div>
<div style="position:absolute;left:848px;width:600px;top:779.6px;height:20px;line-height:20px;font-size:11.8px;color:#222;font-weight:400;white-space:nowrap;text-align:right;">0,50</div>
<div style="position:absolute;left:1454px;top:779.6px;height:20px;line-height:20px;font-size:11.8px;color:#222;font-weight:400;white-space:nowrap;">Stunde</div>
<div style="position:absolute;left:370px;top:821px;width:1166px;height:30.5px;background:#dcdcdc;"></div>
<div style="position:absolute;left:370px;top:850px;width:1166px;height:1.5px;background:#e0e0e0;"></div>
<div style="position:absolute;left:370px;top:851.5px;width:1166px;height:1.5px;background:#b5b5b5;"></div>
<div style="position:absolute;left:370px;top:853px;width:1166px;height:178px;background:#fff;border-radius:0 0 4px 4px;"></div>
<div style="position:absolute;left:379px;top:826.5px;height:20px;line-height:20px;font-size:14.2px;color:#111;font-weight:400;white-space:nowrap;">Zeiterfassung</div>
<div style="position:absolute;left:921px;width:600px;top:826.8px;height:20px;line-height:20px;font-size:14px;color:#1d3a50;font-weight:400;white-space:nowrap;text-align:right;">03.07.2017</div>
<div style="position:absolute;left:387px;top:864.4px;width:73px;height:22.6px;background:#13a1d8;border:1px solid #0d88bb;border-radius:3px;box-sizing:border-box;"></div>
<div style="position:absolute;left:123.5px;width:600px;top:865.7px;height:20px;line-height:20px;font-size:11.6px;color:#fff;font-weight:400;white-space:nowrap;text-align:center;">Speichern</div>
<div style="position:absolute;left:385px;top:895px;width:1136px;height:24.5px;background:#fdfcca;border:1px solid #b3b08e;border-radius:3px;box-sizing:border-box;"></div>
<div style="position:absolute;left:390px;top:897.2px;height:20px;line-height:20px;font-size:11.7px;color:#6d6a55;font-weight:400;white-space:nowrap;">Buchungsdetails</div>
<div style="position:absolute;left:385px;top:936.0px;height:20px;line-height:20px;font-size:11.7px;color:#173a5c;font-weight:400;white-space:nowrap;">CHANGE-74 Aufgabe 2</div>
<div style="position:absolute;left:651.6px;top:936.0px;height:20px;line-height:20px;font-size:11.8px;color:#222;font-weight:400;white-space:nowrap;">PL</div>
<div style="position:absolute;left:668.7px;top:936.0px;height:20px;line-height:20px;font-size:11.8px;color:#777;font-weight:400;white-space:nowrap;">Projektleit...</div>
<svg style="position:absolute;left:737px;top:943px" width="10" height="6"><path d="M1,1 H9 L5,5 Z" fill="#aaa"/></svg>
<div style="position:absolute;left:748.75px;top:938.8px;width:756.25px;height:16.40000000000009px;background:#fff;"></div>
<div style="position:absolute;left:750.25px;top:940.5999999999999px;width:15.5875px;height:12.800000000000091px;background:#e8e8e8;"></div>
<div style="position:absolute;left:767.4375px;top:940.5999999999999px;width:15.5875px;height:12.800000000000091px;background:#e8e8e8;"></div>
<div style="position:absolute;left:784.625px;top:940.5999999999999px;width:15.5875px;height:12.800000000000091px;background:#e8e8e8;"></div>
<div style="position:absolute;left:801.8125px;top:940.5999999999999px;width:15.5875px;height:12.800000000000091px;background:#e8e8e8;"></div>
<div style="position:absolute;left:819.0px;top:940.5999999999999px;width:15.5875px;height:12.800000000000091px;background:#d3d3d3;"></div>
<div style="position:absolute;left:836.1875px;top:940.5999999999999px;width:15.5875px;height:12.800000000000091px;background:#d3d3d3;"></div>
<div style="position:absolute;left:853.375px;top:940.5999999999999px;width:15.5875px;height:12.800000000000091px;background:#a9d2ab;"></div>
<div style="position:absolute;left:870.5625px;top:940.5999999999999px;width:15.5875px;height:12.800000000000091px;background:#a9d2ab;"></div>
<div style="position:absolute;left:887.75px;top:940.5999999999999px;width:15.5875px;height:12.800000000000091px;background:#d3d3d3;"></div>
<div style="position:absolute;left:904.9375px;top:940.5999999999999px;width:15.5875px;height:12.800000000000091px;background:#a9d2ab;"></div>
<div style="position:absolute;left:922.125px;top:940.5999999999999px;width:15.5875px;height:12.800000000000091px;background:#a9d2ab;"></div>
<div style="position:absolute;left:939.3125px;top:940.5999999999999px;width:15.5875px;height:12.800000000000091px;background:#a9d2ab;"></div>
<div style="position:absolute;left:956.5px;top:940.5999999999999px;width:15.5875px;height:12.800000000000091px;background:#a9d2ab;"></div>
<div style="position:absolute;left:973.6875px;top:940.5999999999999px;width:15.5875px;height:12.800000000000091px;background:#a9d2ab;"></div>
<div style="position:absolute;left:990.875px;top:940.5999999999999px;width:15.5875px;height:12.800000000000091px;background:#a9d2ab;"></div>
<div style="position:absolute;left:1008.0625px;top:940.5999999999999px;width:15.5875px;height:12.800000000000091px;background:#d3d3d3;"></div>
<div style="position:absolute;left:1025.25px;top:940.5999999999999px;width:15.5875px;height:12.800000000000091px;background:#d3d3d3;"></div>
<div style="position:absolute;left:1042.4375px;top:940.5999999999999px;width:15.5875px;height:12.800000000000091px;background:#d3d3d3;"></div>
<div style="position:absolute;left:1059.625px;top:940.5999999999999px;width:15.5875px;height:12.800000000000091px;background:#d3d3d3;"></div>
<div style="position:absolute;left:1076.8125px;top:940.5999999999999px;width:15.5875px;height:12.800000000000091px;background:#d3d3d3;"></div>
<div style="position:absolute;left:1094.0px;top:940.5999999999999px;width:15.5875px;height:12.800000000000091px;background:#e8e8e8;"></div>
<div style="position:absolute;left:1111.1875px;top:940.5999999999999px;width:15.5875px;height:12.800000000000091px;background:#e8e8e8;"></div>
<div style="position:absolute;left:1128.375px;top:940.5999999999999px;width:15.5875px;height:12.800000000000091px;background:#e8e8e8;"></div>
<div style="position:absolute;left:1145.5625px;top:940.5999999999999px;width:15.5875px;height:12.800000000000091px;background:#e8e8e8;"></div>
<div style="position:absolute;left:1162.75px;top:940.5999999999999px;width:15.5875px;height:12.800000000000091px;background:#d3d3d3;"></div>
<div style="position:absolute;left:1179.9375px;top:940.5999999999999px;width:15.5875px;height:12.800000000000091px;background:#d3d3d3;"></div>
<div style="position:absolute;left:1197.125px;top:940.5999999999999px;width:15.5875px;height:12.800000000000091px;background:#d3d3d3;"></div>
<div style="position:absolute;left:1214.3125px;top:940.5999999999999px;width:15.5875px;height:12.800000000000091px;background:#d3d3d3;"></div>
<div style="position:absolute;left:1231.5px;top:940.5999999999999px;width:15.5875px;height:12.800000000000091px;background:#a9d2ab;"></div>
<div style="position:absolute;left:1248.6875px;top:940.5999999999999px;width:15.5875px;height:12.800000000000091px;background:#a9d2ab;"></div>
<div style="position:absolute;left:1265.875px;top:940.5999999999999px;width:15.5875px;height:12.800000000000091px;background:#a9d2ab;"></div>
<div style="position:absolute;left:1283.0625px;top:940.5999999999999px;width:15.5875px;height:12.800000000000091px;background:#a9d2ab;"></div>
<div style="position:absolute;left:1300.25px;top:940.5999999999999px;width:15.5875px;height:12.800000000000091px;background:#d3d3d3;"></div>
<div style="position:absolute;left:1317.4375px;top:940.5999999999999px;width:15.5875px;height:12.800000000000091px;background:#d3d3d3;"></div>
<div style="position:absolute;left:1334.625px;top:940.5999999999999px;width:15.5875px;height:12.800000000000091px;background:#d3d3d3;"></div>
<div style="position:absolute;left:1351.8125px;top:940.5999999999999px;width:15.5875px;height:12.800000000000091px;background:#d3d3d3;"></div>
<div style="position:absolute;left:1369.0px;top:940.5999999999999px;width:15.5875px;height:12.800000000000091px;background:#d3d3d3;"></div>
<div style="position:absolute;left:1386.1875px;top:940.5999999999999px;width:15.5875px;height:12.800000000000091px;background:#d3d3d3;"></div>
<div style="position:absolute;left:1403.375px;top:940.5999999999999px;width:15.5875px;height:12.800000000000091px;background:#d3d3d3;"></div>
<div style="position:absolute;left:1420.5625px;top:940.5999999999999px;width:15.5875px;height:12.800000000000091px;background:#d3d3d3;"></div>
<div style="position:absolute;left:1437.75px;top:940.5999999999999px;width:15.5875px;height:12.800000000000091px;background:#e8e8e8;"></div>
<div style="position:absolute;left:1454.9375px;top:940.5999999999999px;width:15.5875px;height:12.800000000000091px;background:#e8e8e8;"></div>
<div style="position:absolute;left:1472.125px;top:940.5999999999999px;width:15.5875px;height:12.800000000000091px;background:#e8e8e8;"></div>
<div style="position:absolute;left:1489.3125px;top:940.5999999999999px;width:15.5875px;height:12.800000000000091px;background:#e8e8e8;"></div>
<div style="position:absolute;left:748.75px;top:938.8px;width:756.25px;height:1px;background:#5a5a5a;"></div>
<div style="position:absolute;left:748.75px;top:953.9000000000001px;width:756.25px;height:1.3px;background:#555;"></div>
<div style="position:absolute;left:748.25px;top:938.8px;width:1px;height:16.40000000000009px;background:#555;"></div>
<div style="position:absolute;left:1504.5px;top:938.8px;width:1px;height:16.40000000000009px;background:#555;"></div>
<div style="position:absolute;left:748.5px;top:928.3px;width:1px;height:10.5px;background:#333;"></div>
<div style="position:absolute;left:752px;top:923.5999999999999px;height:20px;line-height:20px;font-size:9.5px;color:#222;font-weight:400;white-space:nowrap;">7</div>
<div style="position:absolute;left:817.5px;top:928.3px;width:1px;height:10.5px;background:#333;"></div>
<div style="position:absolute;left:821px;top:923.5999999999999px;height:20px;line-height:20px;font-size:9.5px;color:#222;font-weight:400;white-space:nowrap;">8</div>
<div style="position:absolute;left:885.5px;top:928.3px;width:1px;height:10.5px;background:#333;"></div>
<div style="position:absolute;left:889px;top:923.5999999999999px;height:20px;line-height:20px;font-size:9.5px;color:#222;font-weight:400;white-space:nowrap;">9</div>
<div style="position:absolute;left:954.5px;top:928.3px;width:1px;height:10.5px;background:#333;"></div>
<div style="position:absolute;left:958px;top:923.5999999999999px;height:20px;line-height:20px;font-size:9.5px;color:#222;font-weight:400;white-space:nowrap;">10</div>
<div style="position:absolute;left:1023.5px;top:928.3px;width:1px;height:10.5px;background:#333;"></div>
<div style="position:absolute;left:1027px;top:923.5999999999999px;height:20px;line-height:20px;font-size:9.5px;color:#222;font-weight:400;white-space:nowrap;">11</div>
<div style="position:absolute;left:1091.5px;top:928.3px;width:1px;height:10.5px;background:#333;"></div>
<div style="position:absolute;left:1095px;top:923.5999999999999px;height:20px;line-height:20px;font-size:9.5px;color:#222;font-weight:400;white-space:nowrap;">12</div>
<div style="position:absolute;left:1160.5px;top:928.3px;width:1px;height:10.5px;background:#333;"></div>
<div style="position:absolute;left:1164px;top:923.5999999999999px;height:20px;line-height:20px;font-size:9.5px;color:#222;font-weight:400;white-space:nowrap;">13</div>
<div style="position:absolute;left:1229.5px;top:928.3px;width:1px;height:10.5px;background:#333;"></div>
<div style="position:absolute;left:1233px;top:923.5999999999999px;height:20px;line-height:20px;font-size:9.5px;color:#222;font-weight:400;white-space:nowrap;">14</div>
<div style="position:absolute;left:1298.5px;top:928.3px;width:1px;height:10.5px;background:#333;"></div>
<div style="position:absolute;left:1302px;top:923.5999999999999px;height:20px;line-height:20px;font-size:9.5px;color:#222;font-weight:400;white-space:nowrap;">15</div>
<div style="position:absolute;left:1367.5px;top:928.3px;width:1px;height:10.5px;background:#333;"></div>
<div style="position:absolute;left:1371px;top:923.5999999999999px;height:20px;line-height:20px;font-size:9.5px;color:#222;font-weight:400;white-space:nowrap;">16</div>
<div style="position:absolute;left:1435.5px;top:928.3px;width:1px;height:10.5px;background:#333;"></div>
<div style="position:absolute;left:1439px;top:923.5999999999999px;height:20px;line-height:20px;font-size:9.5px;color:#222;font-weight:400;white-space:nowrap;">17</div>
<div style="position:absolute;left:1504.5px;top:928.3px;width:1px;height:10.5px;background:#333;"></div>
<svg style="position:absolute;left:1508px;top:940px" width="12" height="12"><path d="M2,10 L9.5,2.5" stroke="#a9a9a9" stroke-width="1.8"/><path d="M7.5,2 L10,4.5" stroke="#bbb" stroke-width="1.2"/></svg>
<div style="position:absolute;left:385px;top:966.5px;height:20px;line-height:20px;font-size:11.7px;color:#173a5c;font-weight:400;white-space:nowrap;">INC-1071 Drucker druckt nicht in Farbe und ist s...</div>
<div style="position:absolute;left:651.6px;top:966.5px;height:20px;line-height:20px;font-size:11.8px;color:#222;font-weight:400;white-space:nowrap;">PL</div>
<div style="position:absolute;left:668.7px;top:966.5px;height:20px;line-height:20px;font-size:11.8px;color:#777;font-weight:400;white-space:nowrap;">Projektleit...</div>
<svg style="position:absolute;left:737px;top:973.5px" width="10" height="6"><path d="M1,1 H9 L5,5 Z" fill="#aaa"/></svg>
<div style="position:absolute;left:748.75px;top:968.5px;width:756.25px;height:16.700000000000045px;background:#fff;"></div>
<div style="position:absolute;left:750.25px;top:970.3px;width:15.5875px;height:13.100000000000046px;background:#e8e8e8;"></div>
<div style="position:absolute;left:767.4375px;top:970.3px;width:15.5875px;height:13.100000000000046px;background:#e8e8e8;"></div>
<div style="position:absolute;left:784.625px;top:970.3px;width:15.5875px;height:13.100000000000046px;background:#e8e8e8;"></div>
<div style="position:absolute;left:801.8125px;top:970.3px;width:15.5875px;height:13.100000000000046px;background:#e8e8e8;"></div>
<div style="position:absolute;left:819.0px;top:970.3px;width:15.5875px;height:13.100000000000046px;background:#d3d3d3;"></div>
<div style="position:absolute;left:836.1875px;top:970.3px;width:15.5875px;height:13.100000000000046px;background:#d3d3d3;"></div>
<div style="position:absolute;left:853.375px;top:970.3px;width:15.5875px;height:13.100000000000046px;background:#a9d2ab;"></div>
<div style="position:absolute;left:870.5625px;top:970.3px;width:15.5875px;height:13.100000000000046px;background:#a9d2ab;"></div>
<div style="position:absolute;left:887.75px;top:970.3px;width:15.5875px;height:13.100000000000046px;background:#d3d3d3;"></div>
<div style="position:absolute;left:904.9375px;top:970.3px;width:15.5875px;height:13.100000000000046px;background:#a9d2ab;"></div>
<div style="position:absolute;left:922.125px;top:970.3px;width:15.5875px;height:13.100000000000046px;background:#a9d2ab;"></div>
<div style="position:absolute;left:939.3125px;top:970.3px;width:15.5875px;height:13.100000000000046px;background:#a9d2ab;"></div>
<div style="position:absolute;left:956.5px;top:970.3px;width:15.5875px;height:13.100000000000046px;background:#a9d2ab;"></div>
<div style="position:absolute;left:973.6875px;top:970.3px;width:15.5875px;height:13.100000000000046px;background:#a9d2ab;"></div>
<div style="position:absolute;left:990.875px;top:970.3px;width:15.5875px;height:13.100000000000046px;background:#a9d2ab;"></div>
<div style="position:absolute;left:1008.0625px;top:970.3px;width:15.5875px;height:13.100000000000046px;background:#d3d3d3;"></div>
<div style="position:absolute;left:1025.25px;top:970.3px;width:15.5875px;height:13.100000000000046px;background:#d3d3d3;"></div>
<div style="position:absolute;left:1042.4375px;top:970.3px;width:15.5875px;height:13.100000000000046px;background:#d3d3d3;"></div>
<div style="position:absolute;left:1059.625px;top:970.3px;width:15.5875px;height:13.100000000000046px;background:#d3d3d3;"></div>
<div style="position:absolute;left:1076.8125px;top:970.3px;width:15.5875px;height:13.100000000000046px;background:#d3d3d3;"></div>
<div style="position:absolute;left:1094.0px;top:970.3px;width:15.5875px;height:13.100000000000046px;background:#e8e8e8;"></div>
<div style="position:absolute;left:1111.1875px;top:970.3px;width:15.5875px;height:13.100000000000046px;background:#e8e8e8;"></div>
<div style="position:absolute;left:1128.375px;top:970.3px;width:15.5875px;height:13.100000000000046px;background:#e8e8e8;"></div>
<div style="position:absolute;left:1145.5625px;top:970.3px;width:15.5875px;height:13.100000000000046px;background:#e8e8e8;"></div>
<div style="position:absolute;left:1162.75px;top:970.3px;width:15.5875px;height:13.100000000000046px;background:#d3d3d3;"></div>
<div style="position:absolute;left:1179.9375px;top:970.3px;width:15.5875px;height:13.100000000000046px;background:#d3d3d3;"></div>
<div style="position:absolute;left:1197.125px;top:970.3px;width:15.5875px;height:13.100000000000046px;background:#d3d3d3;"></div>
<div style="position:absolute;left:1214.3125px;top:970.3px;width:15.5875px;height:13.100000000000046px;background:#d3d3d3;"></div>
<div style="position:absolute;left:1231.5px;top:970.3px;width:15.5875px;height:13.100000000000046px;background:#a9d2ab;"></div>
<div style="position:absolute;left:1248.6875px;top:970.3px;width:15.5875px;height:13.100000000000046px;background:#a9d2ab;"></div>
<div style="position:absolute;left:1265.875px;top:970.3px;width:15.5875px;height:13.100000000000046px;background:#a9d2ab;"></div>
<div style="position:absolute;left:1283.0625px;top:970.3px;width:15.5875px;height:13.100000000000046px;background:#a9d2ab;"></div>
<div style="position:absolute;left:1300.25px;top:970.3px;width:15.5875px;height:13.100000000000046px;background:#d3d3d3;"></div>
<div style="position:absolute;left:1317.4375px;top:970.3px;width:15.5875px;height:13.100000000000046px;background:#d3d3d3;"></div>
<div style="position:absolute;left:1334.625px;top:970.3px;width:15.5875px;height:13.100000000000046px;background:#d3d3d3;"></div>
<div style="position:absolute;left:1351.8125px;top:970.3px;width:15.5875px;height:13.100000000000046px;background:#d3d3d3;"></div>
<div style="position:absolute;left:1369.0px;top:970.3px;width:15.5875px;height:13.100000000000046px;background:#d3d3d3;"></div>
<div style="position:absolute;left:1386.1875px;top:970.3px;width:15.5875px;height:13.100000000000046px;background:#d3d3d3;"></div>
<div style="position:absolute;left:1403.375px;top:970.3px;width:15.5875px;height:13.100000000000046px;background:#d3d3d3;"></div>
<div style="position:absolute;left:1420.5625px;top:970.3px;width:15.5875px;height:13.100000000000046px;background:#d3d3d3;"></div>
<div style="position:absolute;left:1437.75px;top:970.3px;width:15.5875px;height:13.100000000000046px;background:#e8e8e8;"></div>
<div style="position:absolute;left:1454.9375px;top:970.3px;width:15.5875px;height:13.100000000000046px;background:#e8e8e8;"></div>
<div style="position:absolute;left:1472.125px;top:970.3px;width:15.5875px;height:13.100000000000046px;background:#e8e8e8;"></div>
<div style="position:absolute;left:1489.3125px;top:970.3px;width:15.5875px;height:13.100000000000046px;background:#e8e8e8;"></div>
<div style="position:absolute;left:748.75px;top:968.5px;width:756.25px;height:1px;background:#5a5a5a;"></div>
<div style="position:absolute;left:748.75px;top:983.9000000000001px;width:756.25px;height:1.3px;background:#555;"></div>
<div style="position:absolute;left:748.25px;top:968.5px;width:1px;height:16.700000000000045px;background:#555;"></div>
<div style="position:absolute;left:1504.5px;top:968.5px;width:1px;height:16.700000000000045px;background:#555;"></div>
<div style="position:absolute;left:748.5px;top:965.5px;width:1px;height:3px;background:#555;"></div>
<div style="position:absolute;left:817.5px;top:965.5px;width:1px;height:3px;background:#555;"></div>
<div style="position:absolute;left:885.5px;top:965.5px;width:1px;height:3px;background:#555;"></div>
<div style="position:absolute;left:954.5px;top:965.5px;width:1px;height:3px;background:#555;"></div>
<div style="position:absolute;left:1023.5px;top:965.5px;width:1px;height:3px;background:#555;"></div>
<div style="position:absolute;left:1091.5px;top:965.5px;width:1px;height:3px;background:#555;"></div>
<div style="position:absolute;left:1160.5px;top:965.5px;width:1px;height:3px;background:#555;"></div>
<div style="position:absolute;left:1229.5px;top:965.5px;width:1px;height:3px;background:#555;"></div>
<div style="position:absolute;left:1298.5px;top:965.5px;width:1px;height:3px;background:#555;"></div>
<div style="position:absolute;left:1367.5px;top:965.5px;width:1px;height:3px;background:#555;"></div>
<div style="position:absolute;left:1435.5px;top:965.5px;width:1px;height:3px;background:#555;"></div>
<div style="position:absolute;left:1504.5px;top:965.5px;width:1px;height:3px;background:#555;"></div>
<svg style="position:absolute;left:1508px;top:970.5px" width="12" height="12"><path d="M2,10 L9.5,2.5" stroke="#a9a9a9" stroke-width="1.8"/><path d="M7.5,2 L10,4.5" stroke="#bbb" stroke-width="1.2"/></svg>
<div style="position:absolute;left:385px;top:996.6px;height:20px;line-height:20px;font-size:11.7px;color:#173a5c;font-weight:400;white-space:nowrap;">INC-1339 Drucker druckt nicht</div>
<div style="position:absolute;left:651.6px;top:996.6px;height:20px;line-height:20px;font-size:11.8px;color:#222;font-weight:400;white-space:nowrap;">PL</div>
<div style="position:absolute;left:668.7px;top:996.6px;height:20px;line-height:20px;font-size:11.8px;color:#777;font-weight:400;white-space:nowrap;">Projektleit...</div>
<svg style="position:absolute;left:737px;top:1003.6px" width="10" height="6"><path d="M1,1 H9 L5,5 Z" fill="#aaa"/></svg>
<div style="position:absolute;left:748.75px;top:998.6px;width:756.25px;height:16.899999999999977px;background:#fff;"></div>
<div style="position:absolute;left:750.25px;top:1000.4px;width:15.5875px;height:13.299999999999978px;background:#e8e8e8;"></div>
<div style="position:absolute;left:767.4375px;top:1000.4px;width:15.5875px;height:13.299999999999978px;background:#e8e8e8;"></div>
<div style="position:absolute;left:784.625px;top:1000.4px;width:15.5875px;height:13.299999999999978px;background:#e8e8e8;"></div>
<div style="position:absolute;left:801.8125px;top:1000.4px;width:15.5875px;height:13.299999999999978px;background:#e8e8e8;"></div>
<div style="position:absolute;left:819.0px;top:1000.4px;width:15.5875px;height:13.299999999999978px;background:#d3d3d3;"></div>
<div style="position:absolute;left:836.1875px;top:1000.4px;width:15.5875px;height:13.299999999999978px;background:#d3d3d3;"></div>
<div style="position:absolute;left:853.375px;top:1000.4px;width:15.5875px;height:13.299999999999978px;background:#a9d2ab;"></div>
<div style="position:absolute;left:870.5625px;top:1000.4px;width:15.5875px;height:13.299999999999978px;background:#a9d2ab;"></div>
<div style="position:absolute;left:887.75px;top:1000.4px;width:15.5875px;height:13.299999999999978px;background:#d3d3d3;"></div>
<div style="position:absolute;left:904.9375px;top:1000.4px;width:15.5875px;height:13.299999999999978px;background:#a9d2ab;"></div>
<div style="position:absolute;left:922.125px;top:1000.4px;width:15.5875px;height:13.299999999999978px;background:#a9d2ab;"></div>
<div style="position:absolute;left:939.3125px;top:1000.4px;width:15.5875px;height:13.299999999999978px;background:#a9d2ab;"></div>
<div style="position:absolute;left:956.5px;top:1000.4px;width:15.5875px;height:13.299999999999978px;background:#a9d2ab;"></div>
<div style="position:absolute;left:973.6875px;top:1000.4px;width:15.5875px;height:13.299999999999978px;background:#a9d2ab;"></div>
<div style="position:absolute;left:990.875px;top:1000.4px;width:15.5875px;height:13.299999999999978px;background:#a9d2ab;"></div>
<div style="position:absolute;left:1008.0625px;top:1000.4px;width:15.5875px;height:13.299999999999978px;background:#d3d3d3;"></div>
<div style="position:absolute;left:1025.25px;top:1000.4px;width:15.5875px;height:13.299999999999978px;background:#d3d3d3;"></div>
<div style="position:absolute;left:1042.4375px;top:1000.4px;width:15.5875px;height:13.299999999999978px;background:#d3d3d3;"></div>
<div style="position:absolute;left:1059.625px;top:1000.4px;width:15.5875px;height:13.299999999999978px;background:#d3d3d3;"></div>
<div style="position:absolute;left:1076.8125px;top:1000.4px;width:15.5875px;height:13.299999999999978px;background:#d3d3d3;"></div>
<div style="position:absolute;left:1094.0px;top:1000.4px;width:15.5875px;height:13.299999999999978px;background:#e8e8e8;"></div>
<div style="position:absolute;left:1111.1875px;top:1000.4px;width:15.5875px;height:13.299999999999978px;background:#e8e8e8;"></div>
<div style="position:absolute;left:1128.375px;top:1000.4px;width:15.5875px;height:13.299999999999978px;background:#e8e8e8;"></div>
<div style="position:absolute;left:1145.5625px;top:1000.4px;width:15.5875px;height:13.299999999999978px;background:#e8e8e8;"></div>
<div style="position:absolute;left:1162.75px;top:1000.4px;width:15.5875px;height:13.299999999999978px;background:#d3d3d3;"></div>
<div style="position:absolute;left:1179.9375px;top:1000.4px;width:15.5875px;height:13.299999999999978px;background:#d3d3d3;"></div>
<div style="position:absolute;left:1197.125px;top:1000.4px;width:15.5875px;height:13.299999999999978px;background:#d3d3d3;"></div>
<div style="position:absolute;left:1214.3125px;top:1000.4px;width:15.5875px;height:13.299999999999978px;background:#d3d3d3;"></div>
<div style="position:absolute;left:1231.5px;top:1000.4px;width:15.5875px;height:13.299999999999978px;background:#a9d2ab;"></div>
<div style="position:absolute;left:1248.6875px;top:1000.4px;width:15.5875px;height:13.299999999999978px;background:#a9d2ab;"></div>
<div style="position:absolute;left:1265.875px;top:1000.4px;width:15.5875px;height:13.299999999999978px;background:#a9d2ab;"></div>
<div style="position:absolute;left:1283.0625px;top:1000.4px;width:15.5875px;height:13.299999999999978px;background:#a9d2ab;"></div>
<div style="position:absolute;left:1300.25px;top:1000.4px;width:15.5875px;height:13.299999999999978px;background:#d3d3d3;"></div>
<div style="position:absolute;left:1317.4375px;top:1000.4px;width:15.5875px;height:13.299999999999978px;background:#d3d3d3;"></div>
<div style="position:absolute;left:1334.625px;top:1000.4px;width:15.5875px;height:13.299999999999978px;background:#d3d3d3;"></div>
<div style="position:absolute;left:1351.8125px;top:1000.4px;width:15.5875px;height:13.299999999999978px;background:#d3d3d3;"></div>
<div style="position:absolute;left:1369.0px;top:1000.4px;width:15.5875px;height:13.299999999999978px;background:#d3d3d3;"></div>
<div style="position:absolute;left:1386.1875px;top:1000.4px;width:15.5875px;height:13.299999999999978px;background:#d3d3d3;"></div>
<div style="position:absolute;left:1403.375px;top:1000.4px;width:15.5875px;height:13.299999999999978px;background:#d3d3d3;"></div>
<div style="position:absolute;left:1420.5625px;top:1000.4px;width:15.5875px;height:13.299999999999978px;background:#d3d3d3;"></div>
<div style="position:absolute;left:1437.75px;top:1000.4px;width:15.5875px;height:13.299999999999978px;background:#e8e8e8;"></div>
<div style="position:absolute;left:1454.9375px;top:1000.4px;width:15.5875px;height:13.299999999999978px;background:#e8e8e8;"></div>
<div style="position:absolute;left:1472.125px;top:1000.4px;width:15.5875px;height:13.299999999999978px;background:#e8e8e8;"></div>
<div style="position:absolute;left:1489.3125px;top:1000.4px;width:15.5875px;height:13.299999999999978px;background:#e8e8e8;"></div>
<div style="position:absolute;left:748.75px;top:998.6px;width:756.25px;height:1px;background:#5a5a5a;"></div>
<div style="position:absolute;left:748.75px;top:1014.2px;width:756.25px;height:1.3px;background:#555;"></div>
<div style="position:absolute;left:748.25px;top:998.6px;width:1px;height:16.899999999999977px;background:#555;"></div>
<div style="position:absolute;left:1504.5px;top:998.6px;width:1px;height:16.899999999999977px;background:#555;"></div>
<div style="position:absolute;left:748.5px;top:995.6px;width:1px;height:3px;background:#555;"></div>
<div style="position:absolute;left:817.5px;top:995.6px;width:1px;height:3px;background:#555;"></div>
<div style="position:absolute;left:885.5px;top:995.6px;width:1px;height:3px;background:#555;"></div>
<div style="position:absolute;left:954.5px;top:995.6px;width:1px;height:3px;background:#555;"></div>
<div style="position:absolute;left:1023.5px;top:995.6px;width:1px;height:3px;background:#555;"></div>
<div style="position:absolute;left:1091.5px;top:995.6px;width:1px;height:3px;background:#555;"></div>
<div style="position:absolute;left:1160.5px;top:995.6px;width:1px;height:3px;background:#555;"></div>
<div style="position:absolute;left:1229.5px;top:995.6px;width:1px;height:3px;background:#555;"></div>
<div style="position:absolute;left:1298.5px;top:995.6px;width:1px;height:3px;background:#555;"></div>
<div style="position:absolute;left:1367.5px;top:995.6px;width:1px;height:3px;background:#555;"></div>
<div style="position:absolute;left:1435.5px;top:995.6px;width:1px;height:3px;background:#555;"></div>
<div style="position:absolute;left:1504.5px;top:995.6px;width:1px;height:3px;background:#555;"></div>
<svg style="position:absolute;left:1508px;top:1000.6px" width="12" height="12"><path d="M2,10 L9.5,2.5" stroke="#a9a9a9" stroke-width="1.8"/><path d="M7.5,2 L10,4.5" stroke="#bbb" stroke-width="1.2"/></svg>
<svg style="position:absolute;left:736px;top:926px" width="10" height="14"><path d="M7.5,1.5 V11.5 L1.5,6.5 Z" fill="#b4b4b4"/></svg>
<svg style="position:absolute;left:1508px;top:926px" width="10" height="14"><path d="M2.5,1.5 V11.5 L8.5,6.5 Z" fill="#b4b4b4"/></svg>
<div style="position:absolute;left:1566px;top:102px;width:252px;height:29.5px;background:#dcdcdc;"></div>
<div style="position:absolute;left:1566px;top:130px;width:252px;height:1.5px;background:#e0e0e0;"></div>
<div style="position:absolute;left:1566px;top:131.5px;width:252px;height:1.5px;background:#b5b5b5;"></div>
<div style="position:absolute;left:1566px;top:133px;width:252px;height:90px;background:#fff;border-radius:0 0 4px 4px;"></div>
<div style="position:absolute;left:1575px;top:107.0px;height:20px;line-height:20px;font-size:14.2px;color:#111;font-weight:400;white-space:nowrap;">Meine Zeiterfassungen</div>
<div style="position:absolute;left:1735.3px;top:107.6px;height:20px;line-height:20px;font-size:14px;color:#1d3a50;font-weight:400;white-space:nowrap;">03.07.2017</div>
<div style="position:absolute;left:1574px;top:180px;width:236px;height:17px;background:#fcfcfc;"></div>
<div style="position:absolute;left:1393px;width:600px;top:141.7px;height:20px;line-height:20px;font-size:13.6px;color:#222;font-weight:700;white-space:nowrap;text-align:center;">Ist</div>
<div style="position:absolute;left:1209px;width:600px;top:141.7px;height:20px;line-height:20px;font-size:13.6px;color:#222;font-weight:700;white-space:nowrap;text-align:right;">Soll</div>
<div style="position:absolute;left:1014px;width:600px;top:160.8px;height:20px;line-height:20px;font-size:11.3px;color:#222;font-weight:400;white-space:nowrap;text-align:right;">Tag</div>
<div style="position:absolute;left:1101.3px;width:600px;top:160.8px;height:20px;line-height:20px;font-size:11.3px;color:#222;font-weight:400;white-space:nowrap;text-align:right;">3,00</div>
<svg style="position:absolute;left:1709.5px;top:165.3px" width="11" height="11"><circle cx="5.5" cy="5.5" r="4.3" fill="none" stroke="#d4283c" stroke-width="1.3"/><circle cx="4" cy="4.3" r="0.7" fill="#d4283c"/><circle cx="7" cy="4.3" r="0.7" fill="#d4283c"/><path d="M3.3,8 Q5.5,6 7.7,8" fill="none" stroke="#d4283c" stroke-width="1"/></svg>
<div style="position:absolute;left:1209.7px;width:600px;top:160.8px;height:20px;line-height:20px;font-size:11.3px;color:#222;font-weight:400;white-space:nowrap;text-align:right;">8,00</div>
<div style="position:absolute;left:1014px;width:600px;top:178.70000000000002px;height:20px;line-height:20px;font-size:11.3px;color:#222;font-weight:400;white-space:nowrap;text-align:right;">Woche</div>
<div style="position:absolute;left:1101.3px;width:600px;top:178.70000000000002px;height:20px;line-height:20px;font-size:11.3px;color:#222;font-weight:400;white-space:nowrap;text-align:right;">3,00</div>
<svg style="position:absolute;left:1709.5px;top:183.20000000000002px" width="11" height="11"><circle cx="5.5" cy="5.5" r="4.3" fill="none" stroke="#d4283c" stroke-width="1.3"/><circle cx="4" cy="4.3" r="0.7" fill="#d4283c"/><circle cx="7" cy="4.3" r="0.7" fill="#d4283c"/><path d="M3.3,8 Q5.5,6 7.7,8" fill="none" stroke="#d4283c" stroke-width="1"/></svg>
<div style="position:absolute;left:1209.7px;width:600px;top:178.70000000000002px;height:20px;line-height:20px;font-size:11.3px;color:#222;font-weight:400;white-space:nowrap;text-align:right;">40,00</div>
<div style="position:absolute;left:1014px;width:600px;top:196.60000000000002px;height:20px;line-height:20px;font-size:11.3px;color:#222;font-weight:400;white-space:nowrap;text-align:right;">Monat</div>
<div style="position:absolute;left:1101.3px;width:600px;top:196.60000000000002px;height:20px;line-height:20px;font-size:11.3px;color:#222;font-weight:400;white-space:nowrap;text-align:right;">3,00</div>
<svg style="position:absolute;left:1709.5px;top:201.10000000000002px" width="11" height="11"><circle cx="5.5" cy="5.5" r="4.3" fill="none" stroke="#d4283c" stroke-width="1.3"/><circle cx="4" cy="4.3" r="0.7" fill="#d4283c"/><circle cx="7" cy="4.3" r="0.7" fill="#d4283c"/><path d="M3.3,8 Q5.5,6 7.7,8" fill="none" stroke="#d4283c" stroke-width="1"/></svg>
<div style="position:absolute;left:1209.7px;width:600px;top:196.60000000000002px;height:20px;line-height:20px;font-size:11.3px;color:#222;font-weight:400;white-space:nowrap;text-align:right;">168,00</div>
</body></html>
